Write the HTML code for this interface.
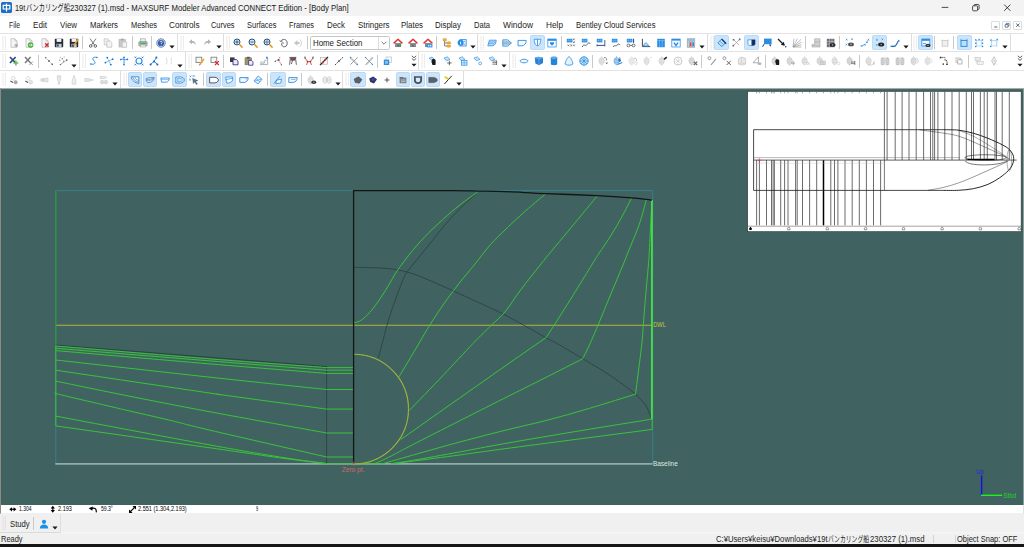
<!DOCTYPE html><html><head><meta charset="utf-8"><title>MAXSURF Modeler</title><style>
*{box-sizing:border-box}
html,body{margin:0;padding:0}
body{width:1024px;height:547px;position:relative;overflow:hidden;background:#fff;font-family:"Liberation Sans","Noto Sans CJK JP",sans-serif;color:#1a1a1a}
.abs{position:absolute}
#title{left:0;top:0;width:1024px;height:16px;background:#f3f3f3}
#title .t{left:15px;top:2.2px;font-size:8.6px;line-height:11px;white-space:nowrap;color:#111;letter-spacing:-0.12px}
#menu{left:0;top:16px;width:1024px;height:17px;background:#fff}
.mi{position:absolute;top:20px;font-size:8.3px;line-height:10px;white-space:nowrap;color:#1c1c1c}
#tb{left:0;top:33px;width:1024px;height:56px;background:#fff}
#canvas{left:0;top:88.5px;width:1024px;height:416.3px;background:#406361}
#info{left:0;top:505px;width:1024px;height:8.5px;background:#fff}
#study{left:0;top:513.3px;width:1024px;height:20px;background:#f0f0f0}
#status{left:0;top:533px;width:1024px;height:11px;background:#f0f0f0}
#black{left:0;top:543.8px;width:1024px;height:4px;background:#161616}
svg{position:absolute;overflow:visible}
svg text{font-family:"Liberation Sans","Noto Sans CJK JP",sans-serif}
</style></head><body>
<div id="title" class="abs"></div>
<div class="abs fit" style="left:15.30px;top:2.90px;font-size:9px;line-height:10.8px;color:#181818;white-space:nowrap;transform-origin:0 50%;transform:scaleX(0.8230);">19t</div>
<div class="abs fit" style="left:25.90px;top:2.70px;font-size:8.7px;line-height:10.4px;color:#181818;white-space:nowrap;transform-origin:0 50%;transform:scaleX(0.7184);">バンカリング船</div>
<div class="abs fit" style="left:69.75px;top:2.90px;font-size:9px;line-height:10.8px;color:#181818;white-space:nowrap;transform-origin:0 50%;transform:scaleX(0.8631);">230327 (1).msd - MAXSURF Modeler Advanced CONNECT Edition - [Body Plan]</div>
<div id="menu" class="abs"></div>
<div class="abs fit" style="left:8.50px;top:19.60px;font-size:8.4px;line-height:10.1px;color:#1c1c1c;white-space:nowrap;transform-origin:0 50%;transform:scaleX(0.8148);">File</div>
<div class="abs fit" style="left:33.00px;top:19.60px;font-size:8.4px;line-height:10.1px;color:#1c1c1c;white-space:nowrap;transform-origin:0 50%;transform:scaleX(0.9697);">Edit</div>
<div class="abs fit" style="left:60.00px;top:19.60px;font-size:8.4px;line-height:10.1px;color:#1c1c1c;white-space:nowrap;transform-origin:0 50%;transform:scaleX(0.9436);">View</div>
<div class="abs fit" style="left:89.50px;top:19.60px;font-size:8.4px;line-height:10.1px;color:#1c1c1c;white-space:nowrap;transform-origin:0 50%;transform:scaleX(0.9256);">Markers</div>
<div class="abs fit" style="left:130.50px;top:19.60px;font-size:8.4px;line-height:10.1px;color:#1c1c1c;white-space:nowrap;transform-origin:0 50%;transform:scaleX(0.8865);">Meshes</div>
<div class="abs fit" style="left:169.00px;top:19.60px;font-size:8.4px;line-height:10.1px;color:#1c1c1c;white-space:nowrap;transform-origin:0 50%;transform:scaleX(0.9780);">Controls</div>
<div class="abs fit" style="left:211.00px;top:19.60px;font-size:8.4px;line-height:10.1px;color:#1c1c1c;white-space:nowrap;transform-origin:0 50%;transform:scaleX(0.8857);">Curves</div>
<div class="abs fit" style="left:247.00px;top:19.60px;font-size:8.4px;line-height:10.1px;color:#1c1c1c;white-space:nowrap;transform-origin:0 50%;transform:scaleX(0.8922);">Surfaces</div>
<div class="abs fit" style="left:289.00px;top:19.60px;font-size:8.4px;line-height:10.1px;color:#1c1c1c;white-space:nowrap;transform-origin:0 50%;transform:scaleX(0.8806);">Frames</div>
<div class="abs fit" style="left:327.00px;top:19.60px;font-size:8.4px;line-height:10.1px;color:#1c1c1c;white-space:nowrap;transform-origin:0 50%;transform:scaleX(0.9427);">Deck</div>
<div class="abs fit" style="left:357.50px;top:19.60px;font-size:8.4px;line-height:10.1px;color:#1c1c1c;white-space:nowrap;transform-origin:0 50%;transform:scaleX(0.9399);">Stringers</div>
<div class="abs fit" style="left:401.00px;top:19.60px;font-size:8.4px;line-height:10.1px;color:#1c1c1c;white-space:nowrap;transform-origin:0 50%;transform:scaleX(0.9450);">Plates</div>
<div class="abs fit" style="left:435.00px;top:19.60px;font-size:8.4px;line-height:10.1px;color:#1c1c1c;white-space:nowrap;transform-origin:0 50%;transform:scaleX(0.9465);">Display</div>
<div class="abs fit" style="left:474.00px;top:19.60px;font-size:8.4px;line-height:10.1px;color:#1c1c1c;white-space:nowrap;transform-origin:0 50%;transform:scaleX(0.9038);">Data</div>
<div class="abs fit" style="left:503.00px;top:19.60px;font-size:8.4px;line-height:10.1px;color:#1c1c1c;white-space:nowrap;transform-origin:0 50%;transform:scaleX(1.0068);">Window</div>
<div class="abs fit" style="left:546.00px;top:19.60px;font-size:8.4px;line-height:10.1px;color:#1c1c1c;white-space:nowrap;transform-origin:0 50%;transform:scaleX(0.9864);">Help</div>
<div class="abs fit" style="left:575.75px;top:19.60px;font-size:8.4px;line-height:10.1px;color:#1c1c1c;white-space:nowrap;transform-origin:0 50%;transform:scaleX(0.9181);">Bentley Cloud Services</div>
<div id="tb" class="abs"></div>
<div id="canvas" class="abs"></div>
<div id="info" class="abs"></div>
<div id="study" class="abs"></div>
<div id="status" class="abs"></div>
<div id="black" class="abs"></div>
<svg class="abs" style="left:0;top:0" width="1024" height="547" viewBox="0 0 1024 547">
<rect x="0" y="88.5" width="1" height="425" fill="#8a8a86"/>
<rect x="0" y="88.3" width="1024" height="0.9" fill="#7e8886"/>
<rect x="1023" y="89" width="1" height="416" fill="#8e9c9a"/>
<rect x="1023" y="505" width="1" height="8.4" fill="#e2e2e2"/>
<rect x="0" y="532.4" width="1024" height="0.8" fill="#f9f9f9"/>
<rect x="55.8" y="190.6" width="596.9" height="273.1" fill="none" stroke="#3b7f8e" stroke-width="0.9"/>
<line x1="55.3" y1="463.9" x2="652.5" y2="463.9" stroke="#93aaa8" stroke-width="1.7"/>
<line x1="55.8" y1="325.2" x2="652" y2="325.2" stroke="#b4b43a" stroke-width="1.1"/>
<line x1="55.8" y1="190.6" x2="55.8" y2="345.6" stroke="#2f9a33" stroke-width="1.1"/>
<line x1="55.8" y1="345.6" x2="55.8" y2="425.9" stroke="#38c43a" stroke-width="1"/>
<polyline points="55.8,345.1 326.6,366.6" fill="none" stroke="#2a3e3f" stroke-width="0.9" />
<polyline points="326.6,366.6 326.6,463.7" fill="none" stroke="#2a3e3f" stroke-width="0.8" />
<path d="M55.80,346.00 C81.50,348.15 164.87,355.30 210.00,358.90 C255.13,362.50 307.17,366.15 326.60,367.60" fill="none" stroke="#38c43a" stroke-width="1" />
<path d="M55.80,348.30 C81.50,350.40 164.87,357.25 210.00,360.90 C255.13,364.55 307.17,368.65 326.60,370.20" fill="none" stroke="#38c43a" stroke-width="1" />
<path d="M55.80,350.60 C81.50,352.82 164.87,360.10 210.00,363.90 C255.13,367.70 307.17,371.82 326.60,373.40" fill="none" stroke="#38c43a" stroke-width="1" />
<path d="M55.80,360.00 C81.50,362.87 164.87,372.28 210.00,377.20 C255.13,382.12 307.17,387.45 326.60,389.50" fill="none" stroke="#38c43a" stroke-width="1" />
<path d="M55.80,370.20 C81.50,374.02 182.13,388.97 210.00,393.10 C237.87,397.23 203.57,392.33 223.00,395.00 C242.43,397.67 309.33,406.75 326.60,409.10" fill="none" stroke="#38c43a" stroke-width="1" />
<path d="M55.80,381.10 C67.07,383.42 97.70,389.88 123.40,395.00 C149.10,400.12 176.13,405.47 210.00,411.80 C243.87,418.13 307.17,429.47 326.60,433.00" fill="none" stroke="#38c43a" stroke-width="1" />
<path d="M55.80,393.10 C56.78,393.42 49.65,392.08 61.70,395.00 C73.75,397.92 110.26,406.43 128.10,410.60 C145.94,414.77 155.10,416.73 168.75,420.00 C182.40,423.27 183.69,424.03 210.00,430.20 C236.31,436.37 307.17,452.53 326.60,457.00" fill="none" stroke="#38c43a" stroke-width="1" />
<path d="M55.80,416.10 C81.50,420.92 172.12,438.10 210.00,445.00 C247.88,451.90 263.88,454.43 283.10,457.50 C302.32,460.57 318.27,462.42 325.30,463.40" fill="none" stroke="#38c43a" stroke-width="1" />
<path d="M55.80,425.90 C81.50,429.55 172.12,442.40 210.00,447.80 C247.88,453.20 263.88,455.70 283.10,458.30 C302.32,460.90 318.27,462.55 325.30,463.40" fill="none" stroke="#38c43a" stroke-width="1" />
<line x1="326.6" y1="367.6" x2="353.4" y2="367.6" stroke="#38c43a" stroke-width="1"/>
<line x1="326.6" y1="370.2" x2="353.4" y2="370.2" stroke="#38c43a" stroke-width="1"/>
<line x1="326.6" y1="373.4" x2="353.4" y2="373.4" stroke="#38c43a" stroke-width="1"/>
<line x1="326.6" y1="389.5" x2="353.4" y2="389.5" stroke="#38c43a" stroke-width="1"/>
<line x1="326.6" y1="409.1" x2="353.4" y2="409.1" stroke="#38c43a" stroke-width="1"/>
<line x1="326.6" y1="433.0" x2="353.4" y2="433.0" stroke="#38c43a" stroke-width="1"/>
<line x1="326.6" y1="457.0" x2="353.4" y2="457.0" stroke="#38c43a" stroke-width="1"/>
<line x1="325" y1="463.75" x2="384" y2="463.75" stroke="#38c43a" stroke-width="1.2"/>
<path d="M378.10,358.30 C378.50,356.92 379.02,355.52 380.50,350.00 C381.98,344.48 385.05,332.07 387.00,325.20 C388.95,318.32 390.30,314.35 392.20,308.75 C394.10,303.15 396.32,297.08 398.40,291.60 C400.48,286.12 403.00,279.50 404.70,275.90 C406.40,272.30 404.70,275.00 408.60,270.00 C412.50,265.00 422.24,253.17 428.10,245.90 C433.96,238.63 438.53,232.52 443.75,226.40 C448.97,220.28 453.59,215.06 459.40,209.20 C465.21,203.34 475.40,194.24 478.60,191.25" fill="none" stroke="#2a3e3f" stroke-width="0.8" />
<path d="M353.90,267.30 C358.46,267.43 374.08,267.70 381.25,268.10 C388.42,268.50 391.69,268.78 396.90,269.70 C402.11,270.62 407.30,271.92 412.50,273.60 C417.70,275.28 421.33,276.93 428.10,279.80 C434.87,282.67 445.28,287.28 453.10,290.80 C460.92,294.32 468.75,298.03 475.00,300.90 C481.25,303.77 485.60,305.65 490.60,308.00 C495.60,310.35 499.48,312.13 505.00,315.00 C510.52,317.87 516.93,321.42 523.75,325.20 C530.57,328.98 539.91,334.40 545.90,337.70 C551.89,341.00 553.57,341.49 559.70,345.00 C565.83,348.51 574.88,354.07 582.70,358.75 C590.52,363.43 600.02,368.89 606.60,373.10 C613.18,377.31 617.38,380.48 622.20,384.00 C627.02,387.52 631.60,390.67 635.50,394.20 C639.40,397.73 643.13,401.68 645.60,405.20 C648.07,408.72 649.30,412.97 650.30,415.30 C651.30,417.63 651.38,418.55 651.60,419.20" fill="none" stroke="#2a3e3f" stroke-width="0.8" />
<path d="M353.90,322.80 C354.82,322.54 357.45,322.28 359.40,321.25 C361.35,320.22 363.27,318.81 365.60,316.60 C367.93,314.39 370.79,311.27 373.40,308.00 C376.01,304.73 378.63,300.92 381.25,297.00 C383.87,293.08 386.49,288.79 389.10,284.50 C391.71,280.21 393.00,276.90 396.90,271.25 C400.80,265.60 407.30,256.91 412.50,250.60 C417.70,244.29 422.89,238.73 428.10,233.40 C433.31,228.07 438.53,223.28 443.75,218.60 C448.97,213.92 453.59,209.86 459.40,205.30 C465.21,200.74 475.40,193.59 478.60,191.25" fill="none" stroke="#38c43a" stroke-width="1" />
<path d="M545.90,193.60 C542.98,196.07 533.92,203.58 528.40,208.40 C522.88,213.22 516.70,218.90 512.80,222.50 C508.90,226.10 508.70,226.35 505.00,230.00 C501.30,233.65 495.73,238.57 490.60,244.40 C485.47,250.23 479.40,258.57 474.20,265.00 C469.00,271.43 464.47,276.50 459.40,283.00 C454.32,289.50 448.70,296.97 443.75,304.00 C438.80,311.03 433.99,318.37 429.70,325.20 C425.41,332.03 423.13,336.37 418.00,345.00 C412.87,353.63 402.08,371.67 398.90,377.00" fill="none" stroke="#38c43a" stroke-width="1" />
<path d="M597.50,195.60 C595.10,198.52 588.10,207.05 583.10,213.10 C578.10,219.15 572.70,225.65 567.50,231.90 C562.30,238.15 556.45,245.08 551.90,250.60 C547.35,256.12 545.42,258.43 540.20,265.00 C534.98,271.57 526.47,282.18 520.60,290.00 C514.73,297.82 509.87,306.03 505.00,311.90 C500.13,317.77 496.73,319.93 491.40,325.20 C486.07,330.47 480.94,335.25 473.00,343.50 C465.06,351.75 454.35,363.55 443.75,374.70 C433.15,385.85 415.12,404.45 409.40,410.40" fill="none" stroke="#38c43a" stroke-width="1" />
<path d="M631.60,197.80 C630.03,200.88 625.59,210.05 622.20,216.25 C618.81,222.45 615.16,228.75 611.25,235.00 C607.34,241.25 602.01,248.75 598.75,253.75 C595.49,258.75 595.61,258.69 591.70,265.00 C587.79,271.31 581.55,281.57 575.30,291.60 C569.05,301.63 559.10,317.52 554.20,325.20 C549.30,332.88 547.28,335.62 545.90,337.70" fill="none" stroke="#38c43a" stroke-width="1" />
<path d="M545.90,337.70 C539.92,341.85 521.82,354.35 510.00,362.60 C498.18,370.85 486.04,379.43 475.00,387.20 C463.96,394.97 456.12,400.48 443.75,409.20 C431.38,417.92 407.96,434.45 400.80,439.50" fill="none" stroke="#38c43a" stroke-width="1" />
<path d="M646.40,199.40 C645.23,203.50 642.13,215.98 639.40,224.00 C636.67,232.02 632.73,240.67 630.00,247.50 C627.27,254.33 626.12,257.40 623.00,265.00 C619.88,272.60 615.42,283.07 611.25,293.10 C607.08,303.13 601.64,316.55 598.00,325.20 C594.36,333.85 591.95,339.41 589.40,345.00 C586.85,350.59 583.82,356.46 582.70,358.75" fill="none" stroke="#38c43a" stroke-width="1" />
<path d="M582.70,358.75 C576.25,362.02 556.12,372.29 544.00,378.40 C531.88,384.51 524.10,388.32 510.00,395.40 C495.90,402.48 475.65,412.67 459.40,420.90 C443.15,429.13 423.23,439.28 412.50,444.80 C401.77,450.32 399.92,451.47 395.00,454.00 C390.08,456.53 386.33,458.45 383.00,460.00 C379.67,461.55 376.33,462.75 375.00,463.30" fill="none" stroke="#38c43a" stroke-width="1" />
<path d="M651.90,200.20 C651.50,208.08 650.08,236.70 649.50,247.50 C648.92,258.30 649.05,256.88 648.40,265.00 C647.75,273.12 646.45,286.22 645.60,296.25 C644.75,306.28 643.95,317.07 643.30,325.20 C642.65,333.32 643.00,333.50 641.70,345.00 C640.40,356.50 636.53,386.00 635.50,394.20" fill="none" stroke="#38c43a" stroke-width="1" />
<path d="M635.50,394.20 C626.77,396.87 598.35,405.73 583.10,410.20 C567.85,414.67 557.02,417.65 544.00,421.00 C530.98,424.35 519.10,426.78 505.00,430.30 C490.90,433.82 474.82,437.95 459.40,442.10 C443.98,446.25 425.13,451.65 412.50,455.20 C399.87,458.75 388.42,462.03 383.60,463.40" fill="none" stroke="#38c43a" stroke-width="1" />
<path d="M651.60,419.20 C640.45,421.00 609.13,425.95 584.70,430.00 C560.27,434.05 525.88,439.83 505.00,443.50 C484.12,447.17 474.82,449.18 459.40,452.00 C443.98,454.82 423.97,458.44 412.50,460.40 C401.03,462.36 394.25,463.19 390.60,463.75" fill="none" stroke="#38c43a" stroke-width="1" />
<path d="M652.30,429.40 C627.75,432.62 537.15,444.43 505.00,448.70 C472.85,452.97 474.82,452.92 459.40,455.00 C443.98,457.08 423.18,459.80 412.50,461.20 C401.82,462.60 398.17,463.03 395.30,463.40" fill="none" stroke="#38c43a" stroke-width="1" />
<line x1="651.9" y1="200" x2="651.9" y2="419.2" stroke="#45dc48" stroke-width="1.9"/>
<line x1="652.2" y1="419" x2="652.2" y2="429.4" stroke="#38c43a" stroke-width="1"/>
<path d="M353.7,354.3 A54.8,54.8 0 0 1 353.7,463.9" fill="none" stroke="#b6aa3c" stroke-width="1.1"/>
<path d="M353.7,354.3 A54.8,54.8 0 0 1 353.7,463.9" fill="none" stroke="#58c43c" stroke-width="0.7" stroke-dasharray="2 2"/>
<line x1="353.6" y1="190" x2="353.6" y2="464" stroke="#111614" stroke-width="1.3"/>
<path d="M353.00,190.60 C369.67,190.62 432.07,190.62 453.00,190.70 C473.93,190.78 469.93,190.95 478.60,191.10 C487.27,191.25 493.83,191.18 505.00,191.60 C516.17,192.02 530.23,192.93 545.60,193.60 C560.97,194.27 582.87,194.90 597.20,195.60 C611.53,196.30 623.40,197.17 631.60,197.80 C639.80,198.43 643.02,199.00 646.40,199.40 C649.78,199.80 650.98,200.07 651.90,200.20" fill="none" stroke="#111614" stroke-width="1.3" />
<path d="M351.6,463.8h4M353.6,461.8v4" stroke="#d06a68" stroke-width="0.7" fill="none"/>
<text x="341.7" y="472.4" font-size="7.2" fill="#cf6664" textLength="22.8" lengthAdjust="spacingAndGlyphs">Zero pt.</text>
<text x="653.2" y="327.1" font-size="6.9" fill="#c4ca3e" textLength="12.6" lengthAdjust="spacingAndGlyphs">DWL</text>
<text x="652.9" y="465.9" font-size="6.9" fill="#dfe6e5" textLength="24.9" lengthAdjust="spacingAndGlyphs">Baseline</text>
<line x1="981.6" y1="475.3" x2="981.6" y2="495.8" stroke="#1010e8" stroke-width="1.4"/>
<line x1="981" y1="495.3" x2="1002.2" y2="495.3" stroke="#1ef01e" stroke-width="1.4"/>
<text x="976.2" y="474" font-size="6.6" fill="#2424d8" textLength="7.6" lengthAdjust="spacingAndGlyphs">Up</text>
<text x="1003.2" y="497.8" font-size="6.6" fill="#22d022" textLength="13" lengthAdjust="spacingAndGlyphs">Stbd</text>
</svg>
<svg class="abs" style="left:0;top:0" width="1024" height="547" viewBox="0 0 1024 547">
<rect x="747.6" y="91.3" width="273.6" height="140.4" fill="#fff" stroke="#2e3c3c" stroke-width="0.7"/>
<path d="M756.6,160.2V225.3M759.4,160.2V225.3M766.5,160.2V225.3M771.5,160.2V225.3M773.1,160.2V225.3M774.4,160.2V225.3M780.7,160.2V225.3M784.6,160.2V225.3M788.0,160.2V225.3M795.6,160.2V225.3M797.2,160.2V225.3M802.5,160.2V225.3M809.6,160.2V225.3M816.7,160.2V225.3M830.8,160.2V225.3M834.5,160.2V225.3M837.9,160.2V225.3M845.0,160.2V225.3M852.2,160.2V225.3M859.3,160.2V225.3M866.4,160.2V225.3M873.5,160.2V225.3M880.6,160.2V225.3" stroke="#1c1c1c" stroke-width="0.65" fill="none"/>
<line x1="823.5" y1="160.2" x2="823.5" y2="225.3" stroke="#000" stroke-width="1.5"/>
<path d="M884.4,91.8V160M887.1,91.8V160M895.2,91.8V160M902.1,91.8V160M909.0,91.8V160M916.2,91.8V160M923.6,91.8V160M930.5,91.8V160M932.8,91.8V160M934.6,91.8V160M937.9,91.8V160M944.8,91.8V160M952.0,91.8V160M959.2,91.8V160M966.3,91.8V160M971.5,91.8V160M973.5,91.8V160M980.4,91.8V160M984.2,91.8V160M987.3,91.8V160M995.0,91.8V160M996.5,91.8V160M1002.2,91.8V160M1009.3,91.8V160" stroke="#1c1c1c" stroke-width="0.65" fill="none"/>
<line x1="884.4" y1="160.0" x2="884.4" y2="190.4" stroke="#1c1c1c" stroke-width="0.6"/>
<path d="M756.6,91.8V93.3M759.4,91.8V93.3M766.5,91.8V93.3M771.5,91.8V93.3M773.1,91.8V93.3M774.4,91.8V93.3M780.7,91.8V93.3M784.6,91.8V93.3M788.0,91.8V93.3M795.6,91.8V93.3M797.2,91.8V93.3M802.5,91.8V93.3M809.6,91.8V93.3M816.7,91.8V93.3M830.8,91.8V93.3M834.5,91.8V93.3M837.9,91.8V93.3M845.0,91.8V93.3M852.2,91.8V93.3M859.3,91.8V93.3M866.4,91.8V93.3M873.5,91.8V93.3M880.6,91.8V93.3M823.5,91.8V93.3" stroke="#555" stroke-width="0.5" fill="none"/>
<path d="M944,129.7H753.6V190.4H944" fill="none" stroke="#1c1c1c" stroke-width="0.8"/>
<path d="M944.00,129.70 C946.43,129.78 953.72,129.62 958.60,130.20 C963.48,130.78 968.42,131.85 973.30,133.20 C978.18,134.55 983.03,136.35 987.90,138.30 C992.77,140.25 998.85,142.95 1002.50,144.90 C1006.15,146.85 1007.97,148.05 1009.80,150.00 C1011.63,151.95 1013.02,154.28 1013.50,156.60 C1013.98,158.92 1013.55,161.58 1012.70,163.90 C1011.85,166.22 1010.58,168.18 1008.40,170.50 C1006.22,172.82 1003.02,175.48 999.60,177.80 C996.18,180.12 992.28,182.58 987.90,184.40 C983.52,186.22 978.18,187.72 973.30,188.70 C968.42,189.68 963.48,190.02 958.60,190.30 C953.72,190.58 946.43,190.38 944.00,190.40" fill="none" stroke="#1c1c1c" stroke-width="0.95" />
<path d="M919.40,129.80 C923.50,130.37 937.47,132.15 944.00,133.20 C950.53,134.25 953.72,134.65 958.60,136.10 C963.48,137.55 968.42,139.83 973.30,141.90 C978.18,143.97 983.03,146.30 987.90,148.50 C992.77,150.70 999.08,153.38 1002.50,155.10 C1005.92,156.82 1007.42,158.18 1008.40,158.80" fill="none" stroke="#1c1c1c" stroke-width="0.45" />
<path d="M927.90,190.30 C930.58,189.80 938.88,188.53 944.00,187.30 C949.12,186.07 953.72,184.62 958.60,182.90 C963.48,181.18 968.42,179.07 973.30,177.00 C978.18,174.93 983.03,172.68 987.90,170.50 C992.77,168.32 999.08,165.48 1002.50,163.90 C1005.92,162.32 1007.42,161.48 1008.40,161.00" fill="none" stroke="#1c1c1c" stroke-width="0.45" />
<path d="M958.00,130.00 C960.83,131.17 969.67,134.33 975.00,137.00 C980.33,139.67 985.17,143.00 990.00,146.00 C994.83,149.00 1000.83,152.83 1004.00,155.00 C1007.17,157.17 1008.17,158.33 1009.00,159.00" fill="none" stroke="#1c1c1c" stroke-width="0.35" />
<line x1="753.6" y1="160.1" x2="1016.7" y2="160.1" stroke="#1c1c1c" stroke-width="0.7"/>
<line x1="753.6" y1="157.6" x2="960.0" y2="157.6" stroke="#777" stroke-width="0.5"/>
<line x1="753.6" y1="163.2" x2="884.0" y2="163.2" stroke="#aaa" stroke-width="0.3"/>
<ellipse cx="985.5" cy="157.6" rx="20.5" ry="2.9" fill="none" stroke="#1c1c1c" stroke-width="0.6"/>
<path d="M965.3,161 C968,166.5 1000,166 1007,160.8" fill="none" stroke="#1c1c1c" stroke-width="0.6"/>
<line x1="967.4" y1="159.4" x2="994.5" y2="159.4" stroke="#000" stroke-width="1.3"/>
<ellipse cx="1009.3" cy="160.2" rx="2.3" ry="10.8" fill="none" stroke="#1c1c1c" stroke-width="0.35"/>
<path d="M757.2,160.2h4.4M759.4,158v4.4" stroke="#e03030" stroke-width="0.5" fill="none"/>
<line x1="748.0" y1="226.2" x2="1021.0" y2="226.2" stroke="#444" stroke-width="0.5"/>
<path d="M749.3,230v-1.8l1.2,-1.4l1.2,1.4v1.8z" fill="#000"/>
<path d="M787.6,229.8v-1.6l1.2,-1.3l1.2,1.3v1.6z" fill="none" stroke="#333" stroke-width="0.5"/>
<path d="M826.1,229.8v-1.6l1.2,-1.3l1.2,1.3v1.6z" fill="none" stroke="#333" stroke-width="0.5"/>
<path d="M864.4,229.8v-1.6l1.2,-1.3l1.2,1.3v1.6z" fill="none" stroke="#333" stroke-width="0.5"/>
<path d="M902.3,229.8v-1.6l1.2,-1.3l1.2,1.3v1.6z" fill="none" stroke="#333" stroke-width="0.5"/>
<path d="M940.9,229.8v-1.6l1.2,-1.3l1.2,1.3v1.6z" fill="none" stroke="#333" stroke-width="0.5"/>
<path d="M979.2,229.8v-1.6l1.2,-1.3l1.2,1.3v1.6z" fill="none" stroke="#333" stroke-width="0.5"/>
<path d="M1018.0,229.8v-1.6l1.2,-1.3l1.2,1.3v1.6z" fill="none" stroke="#333" stroke-width="0.5"/>
</svg>
<div class="abs" style="left:0;top:33.2px;width:1024px;height:1px;background:#e2e2e2"></div>
<div class="abs" style="left:0;top:51.2px;width:1024px;height:1px;background:#e2e2e2"></div>
<div class="abs" style="left:0;top:70.0px;width:1024px;height:1px;background:#e2e2e2"></div>
<svg class="abs" style="left:1.80px;top:34.50px" width="5" height="16.0" viewBox="0 0 5 16.0"><path d="M1,1.5V14.5M3.4,1.5V14.5" stroke="#c4c4c4" stroke-width="0.9" stroke-dasharray="0.8 1.25" fill="none"/></svg>
<svg class="abs" style="left:9.40px;top:37.60px" width="10" height="10" viewBox="0 0 10 10"><path d="M2,0.7h3.8l2.3,2.3v6.3h-6.1z" fill="#f6f6f6" stroke="#b4b4b4" stroke-width="0.7"/><path d="M5.8,0.7v2.3h2.3" fill="none" stroke="#b4b4b4" stroke-width="0.6"/><path d="M7.2,5.6v3.6M5.4,7.4h3.6M6,6.2l2.4,2.4M8.4,6.2L6,8.6" stroke="#9c9c9c" stroke-width="0.7"/></svg>
<svg class="abs" style="left:24.40px;top:37.60px" width="10" height="10" viewBox="0 0 10 10"><path d="M2,0.7h3.8l2.3,2.3v6.3h-6.1z" fill="#f6f6f6" stroke="#b4b4b4" stroke-width="0.7"/><path d="M5.8,0.7v2.3h2.3" fill="none" stroke="#b4b4b4" stroke-width="0.6"/><circle cx="6.6" cy="7" r="2.8" fill="#4cae3c"/><path d="M5,7h3M7,5.7l1.3,1.3l-1.3,1.3" stroke="#fff" stroke-width="0.8" fill="none"/></svg>
<svg class="abs" style="left:40.00px;top:37.60px" width="10" height="10" viewBox="0 0 10 10"><path d="M2,0.7h3.8l2.3,2.3v6.3h-6.1z" fill="#f6f6f6" stroke="#b4b4b4" stroke-width="0.7"/><path d="M5.8,0.7v2.3h2.3" fill="none" stroke="#b4b4b4" stroke-width="0.6"/><path d="M5.2,5.3l3.4,3.4M8.6,5.3L5.2,8.7" stroke="#e0262c" stroke-width="1.4"/></svg>
<svg class="abs" style="left:54.40px;top:37.60px" width="10" height="10" viewBox="0 0 10 10"><rect x="0.8" y="0.8" width="8.4" height="8.4" rx="0.6" fill="#262b38"/><rect x="2.6" y="0.8" width="4.8" height="3.1" fill="#f2f2f2"/><rect x="2.4" y="5.8" width="5.2" height="3.4" fill="#c9ccd2"/><rect x="3.2" y="6.4" width="1.4" height="2.2" fill="#262b38"/></svg>
<svg class="abs" style="left:69.40px;top:37.60px" width="10" height="10" viewBox="0 0 10 10"><rect x="0.8" y="0.8" width="8.4" height="8.4" rx="0.6" fill="#262b38"/><rect x="2.6" y="0.8" width="4.8" height="3.1" fill="#f2f2f2"/><rect x="2.4" y="5.8" width="5.2" height="3.4" fill="#c9ccd2"/><rect x="3.2" y="6.4" width="1.4" height="2.2" fill="#262b38"/><path d="M9.3,1.2L4.6,7.6" stroke="#eba12e" stroke-width="1.6"/><path d="M4.6,7.6l-0.7,1.5" stroke="#333" stroke-width="0.9"/></svg>
<div class="abs" style="left:82.25px;top:36.10px;width:1px;height:13px;background:#c9c9c9"></div>
<svg class="abs" style="left:88.00px;top:37.60px" width="10" height="10" viewBox="0 0 10 10"><path d="M2,0.6L6.6,7M8,0.6L3.4,7" stroke="#555" stroke-width="0.8" fill="none"/><circle cx="2.7" cy="8" r="1.3" fill="none" stroke="#444" stroke-width="0.8"/><circle cx="7.3" cy="8" r="1.3" fill="none" stroke="#444" stroke-width="0.8"/></svg>
<svg class="abs" style="left:103.00px;top:37.60px" width="10" height="10" viewBox="0 0 10 10"><path d="M1.2,0.8h3.4l1.6,1.6v4.4h-5z" fill="#f4f4f4" stroke="#bcbcbc" stroke-width="0.7"/><path d="M3.8,3h3.4l1.6,1.6v4.6h-5z" fill="#f4f4f4" stroke="#bcbcbc" stroke-width="0.7"/></svg>
<svg class="abs" style="left:118.00px;top:37.60px" width="10" height="10" viewBox="0 0 10 10"><rect x="1" y="1.6" width="6.4" height="7.4" fill="#c9c9c9" stroke="#b0b0b0" stroke-width="0.6"/><rect x="2.8" y="0.6" width="2.8" height="1.8" fill="#a8a8a8"/><rect x="4.2" y="4" width="4.6" height="5.2" fill="#f2f2f2" stroke="#b8b8b8" stroke-width="0.6"/></svg>
<div class="abs" style="left:131.90px;top:36.10px;width:1px;height:13px;background:#c9c9c9"></div>
<svg class="abs" style="left:137.70px;top:37.60px" width="10" height="10" viewBox="0 0 10 10"><rect x="2.4" y="0.8" width="5.2" height="3.2" fill="#eee" stroke="#999" stroke-width="0.6"/><rect x="0.8" y="3.6" width="8.4" height="4.4" rx="0.6" fill="#b9bcc0" stroke="#8e9196" stroke-width="0.6"/><rect x="1.6" y="4.6" width="6.8" height="1.3" fill="#3fb34a"/><rect x="2.4" y="7" width="5.2" height="2" fill="#f3f3f3" stroke="#999" stroke-width="0.5"/></svg>
<div class="abs" style="left:150.60px;top:36.10px;width:1px;height:13px;background:#c9c9c9"></div>
<svg class="abs" style="left:156.40px;top:37.60px" width="10" height="10" viewBox="0 0 10 10"><circle cx="5" cy="5" r="4.2" fill="#dfe8f6" stroke="#3a5ea8" stroke-width="0.8"/><circle cx="5" cy="5" r="3.1" fill="#2f57a8"/><path d="M4,4.2c0,-1.4 2.2,-1.4 2.2,0c0,0.9 -1.1,0.8 -1.1,1.8" stroke="#fff" stroke-width="0.8" fill="none"/><circle cx="5.1" cy="7" r="0.45" fill="#fff"/></svg>
<svg class="abs" style="left:169.40px;top:44.90px" width="6" height="4" viewBox="0 0 6 4"><path d="M0.4,0.5H5.6L3,3.4z" fill="#1a1a1a"/></svg>
<div class="abs" style="left:177.10px;top:34.00px;width:1px;height:17.00px;background:#dedede"></div>
<svg class="abs" style="left:180.40px;top:34.50px" width="5" height="16.0" viewBox="0 0 5 16.0"><path d="M1,1.5V14.5M3.4,1.5V14.5" stroke="#c4c4c4" stroke-width="0.9" stroke-dasharray="0.8 1.25" fill="none"/></svg>
<svg class="abs" style="left:188.10px;top:38.10px" width="9" height="9" viewBox="0 0 10 10"><path d="M1,4.2L4.4,1.4V3.2C7.6,3.2 8.8,5.2 8.6,8.2C8,6.4 6.8,5.4 4.4,5.4V7z" fill="#b2b2b2"/></svg>
<svg class="abs" style="left:203.10px;top:38.10px" width="9" height="9" viewBox="0 0 10 10"><path d="M9,4.2L5.6,1.4V3.2C2.4,3.2 1.2,5.2 1.4,8.2C2,6.4 3.2,5.4 5.6,5.4V7z" fill="#b2b2b2"/></svg>
<svg class="abs" style="left:215.50px;top:44.90px" width="6" height="4" viewBox="0 0 6 4"><path d="M0.4,0.5H5.6L3,3.4z" fill="#1a1a1a"/></svg>
<div class="abs" style="left:223.10px;top:34.00px;width:1px;height:17.00px;background:#dedede"></div>
<svg class="abs" style="left:226.20px;top:34.50px" width="5" height="16.0" viewBox="0 0 5 16.0"><path d="M1,1.5V14.5M3.4,1.5V14.5" stroke="#c4c4c4" stroke-width="0.9" stroke-dasharray="0.8 1.25" fill="none"/></svg>
<svg class="abs" style="left:233.30px;top:37.60px" width="10" height="10" viewBox="0 0 10 10"><circle cx="4" cy="4" r="3" fill="#d4e8f8" stroke="#24507c" stroke-width="1"/><path d="M6.3,6.3l2.8,2.8" stroke="#e8962a" stroke-width="1.5" stroke-linecap="round"/><path d="M2.4,4h3.2M4,2.4v3.2" stroke="#24507c" stroke-width="0.9"/></svg>
<svg class="abs" style="left:248.00px;top:37.60px" width="10" height="10" viewBox="0 0 10 10"><circle cx="4" cy="4" r="3" fill="#d4e8f8" stroke="#24507c" stroke-width="1"/><path d="M6.3,6.3l2.8,2.8" stroke="#e8962a" stroke-width="1.5" stroke-linecap="round"/><path d="M2.4,4h3.2" stroke="#24507c" stroke-width="0.9"/></svg>
<svg class="abs" style="left:263.10px;top:37.60px" width="10" height="10" viewBox="0 0 10 10"><circle cx="4" cy="4" r="3" fill="#d4e8f8" stroke="#24507c" stroke-width="1"/><path d="M6.3,6.3l2.8,2.8" stroke="#e8962a" stroke-width="1.5" stroke-linecap="round"/><path d="M1.4,4h5.2M4,1.4v5.2" stroke="#24507c" stroke-width="0.6"/></svg>
<svg class="abs" style="left:278.50px;top:37.60px" width="10" height="10" viewBox="0 0 10 10"><path d="M2,3.2C2.6,1 6.6,0.6 7.8,3.2C8.8,5.6 8,8.8 5.4,8.8C3.6,8.8 2.6,7.6 2.6,6.2C2.6,4.8 4,4.4 4.8,5.2" fill="none" stroke="#555" stroke-width="0.9"/><path d="M0.8,2.4l1.4,1.6l1.4,-1.2" fill="none" stroke="#555" stroke-width="0.8"/></svg>
<svg class="abs" style="left:293.10px;top:37.60px" width="10" height="10" viewBox="0 0 10 10"><path d="M1,5l3.4,-3v2h2.2v2H4.4v2z" fill="#c6c6c6"/><path d="M6.4,1.6C9,2 9,8 6.4,8.6" fill="none" stroke="#c6c6c6" stroke-width="0.8"/></svg>
<div class="abs" style="left:306.50px;top:36.10px;width:1px;height:13px;background:#c9c9c9"></div>
<div class="abs" style="left:310.4px;top:35.8px;width:79.2px;height:14.4px;border:1px solid #c6c6c6;border-radius:1.5px;background:#fff"></div>
<div class="abs fit" style="left:312.90px;top:37.90px;font-size:8.4px;line-height:10.1px;color:#202020;white-space:nowrap;transform-origin:0 50%;transform:scaleX(0.9390);">Home Section</div>
<div class="abs" style="left:377.6px;top:36.8px;width:1px;height:12.4px;background:#dcdcdc"></div>
<svg class="abs" style="left:380.6px;top:41px" width="6" height="4" viewBox="0 0 6 4"><path d="M0.6,0.8L3,3.2L5.4,0.8" fill="none" stroke="#555" stroke-width="0.8"/></svg>
<svg class="abs" style="left:392.70px;top:37.60px" width="10" height="10" viewBox="0 0 10 10"><path d="M2,9V5h6v4z" fill="#8a8f96"/><path d="M3.8,9V6.5h2.4V9z" fill="#6d7279"/><path d="M0.6,5.4L5,1.3L9.4,5.4" fill="none" stroke="#e3342f" stroke-width="1.5" stroke-linejoin="round"/><path d="M5.4,7.4h2.4M6.8,6.2l1.4,1.2l-1.4,1.2" stroke="#2ea043" stroke-width="0.9" fill="none"/></svg>
<svg class="abs" style="left:407.70px;top:37.60px" width="10" height="10" viewBox="0 0 10 10"><path d="M2,9V5h6v4z" fill="#8a8f96"/><path d="M3.8,9V6.5h2.4V9z" fill="#6d7279"/><path d="M0.6,5.4L5,1.3L9.4,5.4" fill="none" stroke="#e3342f" stroke-width="1.5" stroke-linejoin="round"/></svg>
<svg class="abs" style="left:422.70px;top:37.60px" width="10" height="10" viewBox="0 0 10 10"><path d="M2,9V5h6v4z" fill="#8a8f96"/><path d="M3.8,9V6.5h2.4V9z" fill="#6d7279"/><path d="M0.6,5.4L5,1.3L9.4,5.4" fill="none" stroke="#e3342f" stroke-width="1.5" stroke-linejoin="round"/><rect x="4" y="6" width="5.4" height="3.4" fill="#2a8de2"/><rect x="5" y="6.8" width="1.4" height="1.6" fill="#d6ecff"/><rect x="7" y="6.8" width="1.4" height="1.6" fill="#d6ecff"/></svg>
<div class="abs" style="left:436.00px;top:36.10px;width:1px;height:13px;background:#c9c9c9"></div>
<svg class="abs" style="left:441.75px;top:37.60px" width="10" height="10" viewBox="0 0 10 10"><path d="M2.6,2.6V8H5M2.6,5H5" stroke="#555" stroke-width="0.7" fill="none"/><rect x="1" y="0.6" width="3.4" height="2.4" rx="0.6" fill="#f0b040" stroke="#d08a1a" stroke-width="0.4"/><rect x="5" y="3.8" width="3.6" height="2.2" rx="0.6" fill="#f0b040" stroke="#d08a1a" stroke-width="0.4"/><rect x="5" y="7" width="3.6" height="2.2" rx="0.6" fill="#f0b040" stroke="#d08a1a" stroke-width="0.4"/></svg>
<svg class="abs" style="left:456.50px;top:37.60px" width="10" height="10" viewBox="0 0 10 10"><rect x="3" y="1.6" width="6.2" height="6.4" fill="#e4f1fd" stroke="#2a8de2" stroke-width="0.8"/><circle cx="3.6" cy="4.8" r="3" fill="#2a8de2"/><path d="M3.6,3.6v2.8" stroke="#fff" stroke-width="0.9"/><path d="M6.4,3.4h1.8M6.4,6.2h1.8" stroke="#2a8de2" stroke-width="0.6"/></svg>
<svg class="abs" style="left:469.50px;top:44.90px" width="6" height="4" viewBox="0 0 6 4"><path d="M0.4,0.5H5.6L3,3.4z" fill="#1a1a1a"/></svg>
<div class="abs" style="left:477.00px;top:34.00px;width:1px;height:17.00px;background:#dedede"></div>
<svg class="abs" style="left:480.20px;top:34.50px" width="5" height="16.0" viewBox="0 0 5 16.0"><path d="M1,1.5V14.5M3.4,1.5V14.5" stroke="#c4c4c4" stroke-width="0.9" stroke-dasharray="0.8 1.25" fill="none"/></svg>
<svg class="abs" style="left:487.40px;top:37.60px" width="10" height="10" viewBox="0 0 10 10"><path d="M2.4,2.2H9.2C9.2,5 7.6,7.8 5.6,7.8H0.8z" fill="#cfe7fb" stroke="#2a8de2" stroke-width="0.8" stroke-linejoin="round"/><path d="M2,4h6.6M1.4,5.8h6" stroke="#2a8de2" stroke-width="0.7"/></svg>
<svg class="abs" style="left:502.40px;top:37.60px" width="10" height="10" viewBox="0 0 10 10"><path d="M0.8,1.8H5.6L9.4,5L5.6,8.2H0.8z" fill="#cfe7fb" stroke="#2a8de2" stroke-width="0.8" stroke-linejoin="round"/><path d="M0.8,3.8H7.6L9.4,5L7.6,6.2H0.8z" fill="#b9bfc6" stroke="#2a8de2" stroke-width="0.4"/></svg>
<svg class="abs" style="left:517.30px;top:37.60px" width="10" height="10" viewBox="0 0 10 10"><path d="M1,2.4H9.2C9.2,5.4 7.4,7.8 4.8,7.8H1z" fill="#f4faff" stroke="#2a8de2" stroke-width="0.9" stroke-linejoin="round"/></svg>
<div class="abs" style="left:530.00px;top:35.10px;width:14.75px;height:14.8px;background:#cde5fa;border:0.6px solid #b9dbf8;border-radius:1.8px"></div>
<svg class="abs" style="left:533.10px;top:38.10px" width="9" height="9" viewBox="0 0 10 10"><path d="M1.4,1.4H8.6C8.6,5.4 7.4,8.6 5,8.6C2.6,8.6 1.4,5.4 1.4,1.4z" fill="#f4faff" stroke="#2a8de2" stroke-width="0.9"/><path d="M5,1.4V8.6" stroke="#2a8de2" stroke-width="0.9"/></svg>
<svg class="abs" style="left:547.30px;top:37.60px" width="10" height="10" viewBox="0 0 10 10"><rect x="0.8" y="1" width="8.4" height="8" fill="#f4faff" stroke="#2a8de2" stroke-width="0.7"/><rect x="0.8" y="1" width="8.4" height="1.8" fill="#2a8de2"/><path d="M3,4.2h4v2H6.2L5,7.8L3.8,6.2H3z" fill="#2a8de2"/></svg>
<div class="abs" style="left:560.50px;top:36.10px;width:1px;height:13px;background:#c9c9c9"></div>
<svg class="abs" style="left:566.40px;top:37.60px" width="10" height="10" viewBox="0 0 10 10"><rect x="0.8" y="0.8" width="5.6" height="3.6" fill="#2a8de2"/><path d="M0.8,2.6h5.6M2.7,0.8v3.6M4.6,0.8v3.6" stroke="#8cc4f2" stroke-width="0.4"/><path d="M7.1,0.6l1.6,1.6m0,-1.6l-1.6,1.6" stroke="#556" stroke-width="0.7"/><path d="M7.1,3.4l1.6,1.6m0,-1.6l-1.6,1.6" stroke="#556" stroke-width="0.7"/><path d="M1.6,6.6l1.6,1.6m0,-1.6l-1.6,1.6" stroke="#556" stroke-width="0.7"/><path d="M4.4,6.6l1.6,1.6m0,-1.6l-1.6,1.6" stroke="#556" stroke-width="0.7"/><path d="M7.1,6.6l1.6,1.6m0,-1.6l-1.6,1.6" stroke="#556" stroke-width="0.7"/></svg>
<svg class="abs" style="left:580.90px;top:37.60px" width="10" height="10" viewBox="0 0 10 10"><rect x="0.8" y="0.8" width="5.6" height="3.6" fill="#2a8de2"/><path d="M0.8,2.6h5.6M2.7,0.8v3.6M4.6,0.8v3.6" stroke="#8cc4f2" stroke-width="0.4"/><path d="M1.2,9C3,5 4.4,9 6,6.6S8.4,4.4 9.2,6" fill="none" stroke="#3a3f48" stroke-width="0.8"/></svg>
<svg class="abs" style="left:596.10px;top:37.60px" width="10" height="10" viewBox="0 0 10 10"><rect x="0.8" y="0.8" width="5.6" height="3.6" fill="#2a8de2"/><path d="M0.8,2.6h5.6M2.7,0.8v3.6M4.6,0.8v3.6" stroke="#8cc4f2" stroke-width="0.4"/><path d="M1,7.4H8.8" stroke="#233a7a" stroke-width="0.9"/><path d="M1,6.4v2M8.8,2v6.4" stroke="#233a7a" stroke-width="0.8"/></svg>
<svg class="abs" style="left:610.90px;top:37.60px" width="10" height="10" viewBox="0 0 10 10"><rect x="0.8" y="0.8" width="5.6" height="3.6" fill="#2a8de2"/><path d="M0.8,2.6h5.6M2.7,0.8v3.6M4.6,0.8v3.6" stroke="#8cc4f2" stroke-width="0.4"/><path d="M2,9C3.4,6.4 4.6,8.8 6,7.2S8,6 9.2,6.8" fill="none" stroke="#3a3f48" stroke-width="0.8"/></svg>
<svg class="abs" style="left:625.90px;top:37.60px" width="10" height="10" viewBox="0 0 10 10"><rect x="0.8" y="0.8" width="5.6" height="3.6" fill="#2a8de2"/><path d="M0.8,2.6h5.6M2.7,0.8v3.6M4.6,0.8v3.6" stroke="#8cc4f2" stroke-width="0.4"/><path d="M7.6,0.8v4" stroke="#233a7a" stroke-width="1"/><circle cx="2.4" cy="7.4" r="1.4" fill="none" stroke="#3a3f48" stroke-width="0.7"/><circle cx="7.6" cy="7.4" r="1.4" fill="none" stroke="#3a3f48" stroke-width="0.7"/><path d="M3.8,7.4h2.4" stroke="#3a3f48" stroke-width="0.7"/></svg>
<svg class="abs" style="left:641.00px;top:37.60px" width="10" height="10" viewBox="0 0 10 10"><path d="M1.4,0.8V8.6H9.2" fill="none" stroke="#333" stroke-width="0.9"/><path d="M2.6,8C3,4 6.6,4 7.4,8z" fill="#bfe0fa" stroke="#2a8de2" stroke-width="0.8"/></svg>
<svg class="abs" style="left:655.60px;top:37.60px" width="10" height="10" viewBox="0 0 10 10"><rect x="1.2" y="0.8" width="7.6" height="8.4" fill="#2a8de2"/><path d="M3.6,2.4V9.2M6.2,2.4V9.2M1.2,2.6H8.8" stroke="#9ccdf6" stroke-width="0.5"/></svg>
<svg class="abs" style="left:671.00px;top:37.60px" width="10" height="10" viewBox="0 0 10 10"><rect x="0.8" y="1" width="8.4" height="8" fill="#f4faff" stroke="#2a8de2" stroke-width="0.7"/><rect x="0.8" y="1" width="8.4" height="1.6" fill="#2a8de2"/><path d="M3,4.6L5,7.6L7,4.6" fill="none" stroke="#2a8de2" stroke-width="1.4"/></svg>
<svg class="abs" style="left:686.10px;top:37.60px" width="10" height="10" viewBox="0 0 10 10"><rect x="1.2" y="0.8" width="7.6" height="8.4" fill="#c9ccd1" stroke="#8e9298" stroke-width="0.6"/><rect x="1.2" y="0.8" width="7.6" height="2.4" fill="#8dbfee"/><path d="M3.6,3.2V9.2M6.2,3.2V9.2" stroke="#80858c" stroke-width="0.6"/><rect x="4" y="4.4" width="1.4" height="3.8" fill="#e04a3a"/><rect x="6.6" y="4.4" width="1.4" height="3.8" fill="#2a8de2"/></svg>
<svg class="abs" style="left:699.00px;top:44.90px" width="6" height="4" viewBox="0 0 6 4"><path d="M0.4,0.5H5.6L3,3.4z" fill="#1a1a1a"/></svg>
<div class="abs" style="left:707.00px;top:34.00px;width:1px;height:17.00px;background:#dedede"></div>
<svg class="abs" style="left:709.80px;top:34.50px" width="5" height="16.0" viewBox="0 0 5 16.0"><path d="M1,1.5V14.5M3.4,1.5V14.5" stroke="#c4c4c4" stroke-width="0.9" stroke-dasharray="0.8 1.25" fill="none"/></svg>
<div class="abs" style="left:714.40px;top:35.10px;width:15.00px;height:14.8px;background:#cde5fa;border:0.6px solid #b9dbf8;border-radius:1.8px"></div>
<svg class="abs" style="left:717.00px;top:37.60px" width="10" height="10" viewBox="0 0 10 10"><path d="M0.8,5L4.6,1L8.6,4.4L5,8.6z" fill="#bfe0fa" stroke="#2a8de2" stroke-width="0.9" stroke-linejoin="round"/><path d="M4.6,1L9.2,5.8" stroke="#1d3f78" stroke-width="1.3"/><path d="M2.8,3.2L6.8,6.6" stroke="#2a8de2" stroke-width="0.6"/></svg>
<svg class="abs" style="left:732.30px;top:38.10px" width="9" height="9" viewBox="0 0 10 10"><path d="M1.4,8.6L8.6,1.4M2,2L8,8" stroke="#8a8a8a" stroke-width="0.7"/><path d="M0.8,1h1.8v1.8H0.8zM7.6,0.6h1.8v1.8H7.6zM0.6,7.6h1.8v1.8H0.6z" fill="#6a6a6a"/></svg>
<div class="abs" style="left:744.40px;top:35.10px;width:14.60px;height:14.8px;background:#cde5fa;border:0.6px solid #b9dbf8;border-radius:1.8px"></div>
<svg class="abs" style="left:747.30px;top:38.10px" width="9" height="9" viewBox="0 0 10 10"><path d="M1,2H9V6.4C9,7.6 8,8.4 6.6,8.4H3.4C2,8.4 1,7.6 1,6.4z" fill="#f4faff" stroke="#2a8de2" stroke-width="0.8"/><path d="M5,2H9V6.4C9,7.6 8,8.4 6.6,8.4H5z" fill="#1c2f52"/></svg>
<svg class="abs" style="left:761.75px;top:37.60px" width="10" height="10" viewBox="0 0 10 10"><rect x="2" y="0.6" width="7.6" height="5.6" fill="#2a8de2"/><path d="M2,6.2L0.6,8.8" stroke="#1d3f78" stroke-width="1"/><path d="M7,6.6l1.2,2.2l1.2,-2.2z" fill="#1d3f78"/></svg>
<svg class="abs" style="left:777.00px;top:37.60px" width="10" height="10" viewBox="0 0 10 10"><path d="M1,1L7,7" stroke="#1a1a1a" stroke-width="1.3"/><path d="M7.8,7.8L3.8,6.8L6.8,3.8z" fill="#1a1a1a"/><rect x="8" y="8" width="1.4" height="1.4" fill="#1d5fb0"/></svg>
<svg class="abs" style="left:791.50px;top:37.60px" width="10" height="10" viewBox="0 0 10 10"><path d="M1,9H9.4M1,9L9,1.4M1,9L9.4,4.2M1,9L9.4,6.8M1,9L5.4,0.8M1,9L2,0.8" stroke="#8e8e8e" stroke-width="0.6" fill="none"/></svg>
<div class="abs" style="left:805.00px;top:36.10px;width:1px;height:13px;background:#c9c9c9"></div>
<svg class="abs" style="left:810.90px;top:37.60px" width="10" height="10" viewBox="0 0 10 10"><path d="M3.6,0.8H9V9H1V6.4H3.6z" fill="#d6d6d6" stroke="#a4a4a4" stroke-width="0.6"/><path d="M1,7.6H9M3.6,3.4H9M3.6,5H9" stroke="#a4a4a4" stroke-width="0.5"/></svg>
<svg class="abs" style="left:825.75px;top:37.60px" width="10" height="10" viewBox="0 0 10 10"><rect x="0.8" y="0.8" width="7.6" height="8.4" fill="#6a6e74"/><path d="M0.8,3.4H8.4M0.8,6H8.4M3.4,0.8V9.2M6,0.8V9.2" stroke="#d8d8d8" stroke-width="0.5"/><ellipse cx="6.6" cy="6.9" rx="2.9" ry="1.9" fill="#2c2c2c"/><circle cx="6.6" cy="6.9" r="0.8" fill="#9a9a9a"/></svg>
<div class="abs" style="left:839.00px;top:36.10px;width:1px;height:13px;background:#c9c9c9"></div>
<svg class="abs" style="left:844.90px;top:37.60px" width="10" height="10" viewBox="0 0 10 10"><path d="M0.8,0.8l1.6,1.6m0,-1.6l-1.6,1.6" stroke="#2a8de2" stroke-width="0.7"/><path d="M6.2,0.4l1.6,1.6m0,-1.6l-1.6,1.6" stroke="#2a8de2" stroke-width="0.7"/><path d="M0.6,5.8l1.6,1.6m0,-1.6l-1.6,1.6" stroke="#2a8de2" stroke-width="0.7"/><ellipse cx="6" cy="6.4" rx="2.9" ry="1.9" fill="#4a4a4a"/><circle cx="6" cy="6.4" r="0.8" fill="#aaa"/></svg>
<svg class="abs" style="left:860.10px;top:37.60px" width="10" height="10" viewBox="0 0 10 10"><path d="M1.4,8L5,6.6L8.6,1.6" fill="none" stroke="#2a8de2" stroke-width="0.8" stroke-dasharray="1.2 0.8"/><path d="M0.8,7.2l1.6,1.6m0,-1.6l-1.6,1.6" stroke="#2a8de2" stroke-width="0.7"/><path d="M3.8,6.0l1.6,1.6m0,-1.6l-1.6,1.6" stroke="#2a8de2" stroke-width="0.7"/><path d="M6.2,3.4l1.6,1.6m0,-1.6l-1.6,1.6" stroke="#2a8de2" stroke-width="0.7"/><path d="M7.6,0.8l1.6,1.6m0,-1.6l-1.6,1.6" stroke="#2a8de2" stroke-width="0.7"/></svg>
<div class="abs" style="left:872.40px;top:35.10px;width:15.00px;height:14.8px;background:#cde5fa;border:0.6px solid #b9dbf8;border-radius:1.8px"></div>
<svg class="abs" style="left:875.00px;top:37.60px" width="10" height="10" viewBox="0 0 10 10"><path d="M1.2,1.0l1.6,1.6m0,-1.6l-1.6,1.6" stroke="#2a8de2" stroke-width="0.7"/><path d="M6.6,0.6l1.6,1.6m0,-1.6l-1.6,1.6" stroke="#2a8de2" stroke-width="0.7"/><path d="M1.0,6.2l1.6,1.6m0,-1.6l-1.6,1.6" stroke="#2a8de2" stroke-width="0.7"/><ellipse cx="6.2" cy="6.6" rx="3" ry="2" fill="#222"/><circle cx="6.2" cy="6.6" r="0.8" fill="#9a9a9a"/></svg>
<svg class="abs" style="left:890.20px;top:37.60px" width="10" height="10" viewBox="0 0 10 10"><path d="M0.8,8.4H4.4C6.6,8.4 6.4,4.6 9.2,2.4" fill="none" stroke="#2468b4" stroke-width="1.2"/><path d="M0.6,7.6l1.6,1.6m0,-1.6l-1.6,1.6" stroke="#2a8de2" stroke-width="0.7"/><path d="M3.8,7.4l1.6,1.6m0,-1.6l-1.6,1.6" stroke="#2a8de2" stroke-width="0.7"/><path d="M7.8,1.8l1.6,1.6m0,-1.6l-1.6,1.6" stroke="#2a8de2" stroke-width="0.7"/></svg>
<svg class="abs" style="left:902.60px;top:44.90px" width="6" height="4" viewBox="0 0 6 4"><path d="M0.4,0.5H5.6L3,3.4z" fill="#1a1a1a"/></svg>
<div class="abs" style="left:910.50px;top:34.00px;width:1px;height:17.00px;background:#dedede"></div>
<svg class="abs" style="left:912.80px;top:34.50px" width="5" height="16.0" viewBox="0 0 5 16.0"><path d="M1,1.5V14.5M3.4,1.5V14.5" stroke="#c4c4c4" stroke-width="0.9" stroke-dasharray="0.8 1.25" fill="none"/></svg>
<div class="abs" style="left:918.20px;top:35.10px;width:14.80px;height:14.8px;background:#cde5fa;border:0.6px solid #b9dbf8;border-radius:1.8px"></div>
<svg class="abs" style="left:920.70px;top:37.60px" width="10" height="10" viewBox="0 0 10 10"><rect x="0.8" y="1" width="8" height="7" fill="#f4faff" stroke="#2a8de2" stroke-width="0.8"/><rect x="0.8" y="1" width="8" height="1.8" fill="#2a8de2"/><path d="M2,5.6h3" stroke="#2a8de2" stroke-width="0.8"/><ellipse cx="7" cy="7.4" rx="2.6" ry="1.7" fill="#333"/><circle cx="7" cy="7.4" r="0.7" fill="#bbb"/></svg>
<div class="abs" style="left:934.10px;top:36.10px;width:1px;height:13px;background:#c9c9c9"></div>
<svg class="abs" style="left:939.90px;top:37.60px" width="10" height="10" viewBox="0 0 10 10"><rect x="2.2" y="2.6" width="5.6" height="5.6" fill="#f0f0f0" stroke="#c4c4c4" stroke-width="0.7"/><path d="M2.2,0.8V9.4M7.8,0.8V9.4M0.6,2.6H9.4" stroke="#cfcfcf" stroke-width="0.5"/></svg>
<div class="abs" style="left:953.10px;top:36.10px;width:1px;height:13px;background:#c9c9c9"></div>
<div class="abs" style="left:956.90px;top:35.10px;width:14.80px;height:14.8px;background:#cde5fa;border:0.6px solid #b9dbf8;border-radius:1.8px"></div>
<svg class="abs" style="left:959.40px;top:37.60px" width="10" height="10" viewBox="0 0 10 10"><rect x="2" y="2.4" width="6" height="6" fill="#bfe0fa" stroke="#2a8de2" stroke-width="1"/><path d="M2,0.8V2.4M8,0.8V2.4" stroke="#2a8de2" stroke-width="0.6"/></svg>
<svg class="abs" style="left:974.25px;top:37.60px" width="10" height="10" viewBox="0 0 10 10"><rect x="2.4" y="2.6" width="5.4" height="5.4" fill="#f4faff" stroke="#a8d2f6" stroke-width="0.7"/><rect x="1.0" y="1.2" width="1.4" height="1.4" fill="#2a8de2"/><rect x="4.4" y="0.8" width="1.4" height="1.4" fill="#2a8de2"/><rect x="7.8" y="1.2" width="1.4" height="1.4" fill="#2a8de2"/><rect x="1.0" y="4.6" width="1.4" height="1.4" fill="#2a8de2"/><rect x="1.0" y="7.8" width="1.4" height="1.4" fill="#2a8de2"/><rect x="7.8" y="4.6" width="1.4" height="1.4" fill="#2a8de2"/><rect x="7.8" y="7.8" width="1.4" height="1.4" fill="#2a8de2"/></svg>
<svg class="abs" style="left:989.00px;top:37.60px" width="10" height="10" viewBox="0 0 10 10"><rect x="2.4" y="2.6" width="5.4" height="5.4" fill="#f4faff" stroke="#a8d2f6" stroke-width="0.7"/><path d="M2.4,0.6V9.2M7.8,0.6V9.2M0.8,2.6H9.4" stroke="#a8d2f6" stroke-width="0.5"/><rect x="1.2" y="1.4" width="1.3" height="1.3" fill="#2a8de2"/><rect x="7.6" y="0.8" width="1.3" height="1.3" fill="#2a8de2"/><rect x="1.0" y="7.8" width="1.3" height="1.3" fill="#2a8de2"/></svg>
<svg class="abs" style="left:1002.25px;top:44.90px" width="6" height="4" viewBox="0 0 6 4"><path d="M0.4,0.5H5.6L3,3.4z" fill="#1a1a1a"/></svg>
<div class="abs" style="left:1010.20px;top:34.00px;width:1px;height:17.00px;background:#dedede"></div>
<svg class="abs" style="left:1.80px;top:53.00px" width="5" height="16.0" viewBox="0 0 5 16.0"><path d="M1,1.5V14.5M3.4,1.5V14.5" stroke="#c4c4c4" stroke-width="0.9" stroke-dasharray="0.8 1.25" fill="none"/></svg>
<svg class="abs" style="left:9.40px;top:56.40px" width="10" height="10" viewBox="0 0 10 10"><path d="M1,1L6.6,7M6.6,1L1,7" stroke="#2b4a8e" stroke-width="1.7"/><path d="M6.9,4.6V9.4M4.5,7H9.3" stroke="#68c244" stroke-width="1.6"/></svg>
<svg class="abs" style="left:24.40px;top:56.40px" width="10" height="10" viewBox="0 0 10 10"><path d="M1,1L6.6,7M6.6,1L1,7" stroke="#7a7a7a" stroke-width="1.5"/><path d="M5.4,5.6L8.8,9M8.8,5.6L5.4,9" stroke="#8c8c8c" stroke-width="0.9"/></svg>
<div class="abs" style="left:37.60px;top:54.90px;width:1px;height:13px;background:#c9c9c9"></div>
<svg class="abs" style="left:43.75px;top:56.40px" width="10" height="10" viewBox="0 0 10 10"><path d="M1.6,1.6L8.4,8.4" stroke="#777" stroke-width="0.6" stroke-dasharray="1 1"/><circle cx="1.8" cy="1.8" r="0.7" fill="#555"/><circle cx="5" cy="5" r="0.9" fill="#555"/><circle cx="8.2" cy="8.2" r="0.8" fill="#444"/></svg>
<svg class="abs" style="left:58.40px;top:56.40px" width="10" height="10" viewBox="0 0 10 10"><path d="M2.4,8.6L8.8,4" stroke="#777" stroke-width="0.6"/><circle cx="2.4" cy="8.6" r="0.7" fill="#555"/><circle cx="8.8" cy="4" r="0.8" fill="#444"/><circle cx="1.8" cy="4.2" r="0.6" fill="#777"/><circle cx="4.2" cy="2.8" r="0.7" fill="#666"/><circle cx="6.2" cy="1" r="0.6" fill="#888"/><circle cx="2.2" cy="1.2" r="0.5" fill="#888"/><circle cx="5.6" cy="5.2" r="0.6" fill="#666"/></svg>
<svg class="abs" style="left:71.40px;top:63.70px" width="6" height="4" viewBox="0 0 6 4"><path d="M0.4,0.5H5.6L3,3.4z" fill="#1a1a1a"/></svg>
<div class="abs" style="left:78.90px;top:52.00px;width:1px;height:18.00px;background:#dedede"></div>
<svg class="abs" style="left:82.00px;top:53.00px" width="5" height="16.0" viewBox="0 0 5 16.0"><path d="M1,1.5V14.5M3.4,1.5V14.5" stroke="#c4c4c4" stroke-width="0.9" stroke-dasharray="0.8 1.25" fill="none"/></svg>
<svg class="abs" style="left:89.30px;top:56.40px" width="10" height="10" viewBox="0 0 10 10"><path d="M8,1.4C4,0.6 2.6,2.6 5,4.8C7.4,7 5.6,9 1.6,8" fill="none" stroke="#2a8de2" stroke-width="1"/><circle cx="8" cy="1.5" r="0.8" fill="#2a8de2"/><circle cx="1.8" cy="8" r="0.8" fill="#2a8de2"/></svg>
<svg class="abs" style="left:104.00px;top:56.40px" width="10" height="10" viewBox="0 0 10 10"><path d="M1.4,6.6L8.6,3.2M3.2,1.6L6.8,8.6" stroke="#2a8de2" stroke-width="0.8" stroke-dasharray="1.4 0.8"/><circle cx="1.4" cy="6.6" r="0.9" fill="#1c6fc4"/><circle cx="8.6" cy="3.2" r="0.9" fill="#1c6fc4"/><circle cx="3.2" cy="1.6" r="0.9" fill="#1c6fc4"/><circle cx="6.8" cy="8.6" r="0.9" fill="#1c6fc4"/></svg>
<svg class="abs" style="left:119.00px;top:56.40px" width="10" height="10" viewBox="0 0 10 10"><path d="M5,1V9" stroke="#2a8de2" stroke-width="0.9"/><path d="M2,3.4C4,2 6,4.8 8.4,3.4" fill="none" stroke="#2a8de2" stroke-width="0.9"/><circle cx="5.0" cy="1.2" r="0.8" fill="#1c6fc4"/><circle cx="5.0" cy="8.8" r="0.8" fill="#1c6fc4"/><circle cx="1.8" cy="3.6" r="0.8" fill="#1c6fc4"/><circle cx="8.4" cy="3.4" r="0.8" fill="#1c6fc4"/></svg>
<svg class="abs" style="left:134.25px;top:56.40px" width="10" height="10" viewBox="0 0 10 10"><circle cx="5" cy="5" r="3" fill="none" stroke="#2a8de2" stroke-width="1.2"/><path d="M0.6,0.6l1.6,1.6m0,-1.6l-1.6,1.6" stroke="#1c6fc4" stroke-width="0.7"/><path d="M7.8,0.6l1.6,1.6m0,-1.6l-1.6,1.6" stroke="#1c6fc4" stroke-width="0.7"/><path d="M0.6,7.8l1.6,1.6m0,-1.6l-1.6,1.6" stroke="#1c6fc4" stroke-width="0.7"/><path d="M7.8,7.8l1.6,1.6m0,-1.6l-1.6,1.6" stroke="#1c6fc4" stroke-width="0.7"/></svg>
<svg class="abs" style="left:149.25px;top:56.40px" width="10" height="10" viewBox="0 0 10 10"><path d="M1.6,8.4L5,5.4L8.4,8.4M5,5.4L7.4,1.6" fill="none" stroke="#2a8de2" stroke-width="1"/><circle cx="1.6" cy="8.4" r="1" fill="#1c5fa8"/><circle cx="5.0" cy="5.4" r="1" fill="#1c5fa8"/><circle cx="8.4" cy="8.4" r="1" fill="#1c5fa8"/><circle cx="7.4" cy="1.6" r="1" fill="#1c5fa8"/></svg>
<svg class="abs" style="left:164.00px;top:56.40px" width="10" height="10" viewBox="0 0 10 10"><path d="M3,1.4C1.4,3.4 4.4,5 2.2,8.4M7.8,1.4C6,3.6 8.8,5.4 6.8,8.4" fill="none" stroke="#cdcdcd" stroke-width="0.7"/></svg>
<svg class="abs" style="left:176.90px;top:63.70px" width="6" height="4" viewBox="0 0 6 4"><path d="M0.4,0.5H5.6L3,3.4z" fill="#1a1a1a"/></svg>
<div class="abs" style="left:185.00px;top:52.00px;width:1px;height:18.00px;background:#dedede"></div>
<svg class="abs" style="left:188.00px;top:53.00px" width="5" height="16.0" viewBox="0 0 5 16.0"><path d="M1,1.5V14.5M3.4,1.5V14.5" stroke="#c4c4c4" stroke-width="0.9" stroke-dasharray="0.8 1.25" fill="none"/></svg>
<svg class="abs" style="left:194.90px;top:56.40px" width="10" height="10" viewBox="0 0 10 10"><rect x="1" y="1.2" width="5.8" height="5.4" fill="#f6f6f6" stroke="#777" stroke-width="0.8"/><path d="M9,3L5,8.2" stroke="#eba12e" stroke-width="1.5"/><path d="M5,8.2l-0.8,1.2" stroke="#333" stroke-width="0.8"/></svg>
<svg class="abs" style="left:210.10px;top:56.40px" width="10" height="10" viewBox="0 0 10 10"><rect x="1" y="1.2" width="5.8" height="5.4" fill="#f6f6f6" stroke="#777" stroke-width="0.8"/><path d="M5,5.2l3.8,3.8M8.8,5.2L5,9" stroke="#e0262c" stroke-width="1.2"/></svg>
<div class="abs" style="left:223.10px;top:54.90px;width:1px;height:13px;background:#c9c9c9"></div>
<svg class="abs" style="left:229.00px;top:56.40px" width="10" height="10" viewBox="0 0 10 10"><rect x="1" y="1.4" width="4.6" height="4.6" fill="#3a3a3a"/><path d="M4,3.6h3.4l1.6,1.6v3.6h-5z" fill="#ecebfa" stroke="#34308e" stroke-width="0.9"/></svg>
<svg class="abs" style="left:244.00px;top:56.40px" width="10" height="10" viewBox="0 0 10 10"><rect x="1" y="1.8" width="6.6" height="7" fill="#9c9566" stroke="#6e6a4a" stroke-width="0.5"/><rect x="2.8" y="0.8" width="3" height="1.8" fill="#555"/><path d="M4.6,4.4h3l1.4,1.4v3.4h-4.4z" fill="#ecebfa" stroke="#34308e" stroke-width="0.8"/></svg>
<svg class="abs" style="left:259.40px;top:56.40px" width="10" height="10" viewBox="0 0 10 10"><path d="M1,8.6H8.6V2" fill="none" stroke="#8a8f96" stroke-width="0.7"/><path d="M1,7H5.6V4.2H8" fill="none" stroke="#a8acb2" stroke-width="0.7"/><ellipse cx="3.4" cy="6.6" rx="2.2" ry="1" fill="none" stroke="#9aa" stroke-width="0.5"/><rect x="7" y="0.8" width="1.8" height="1.8" fill="#2a8de2"/></svg>
<svg class="abs" style="left:273.50px;top:56.40px" width="10" height="10" viewBox="0 0 10 10"><path d="M1,5.4L4.4,3.8L7.6,9M4.4,3.8L6,1" fill="none" stroke="#555" stroke-width="0.7" stroke-dasharray="1.3 0.7"/><circle cx="4.6" cy="4" r="1" fill="#d42a2a"/><circle cx="1.2" cy="5.4" r="0.6" fill="#444"/><circle cx="7.4" cy="8.8" r="0.6" fill="#444"/></svg>
<svg class="abs" style="left:288.10px;top:56.40px" width="10" height="10" viewBox="0 0 10 10"><path d="M1.4,1.4H8.4M2.4,1.4L1.6,8.8M7.4,1.4L8.4,8.8M5,3L3.4,8" fill="none" stroke="#444" stroke-width="0.8"/><rect x="2.6" y="1.6" width="4.6" height="3" fill="#555"/><circle cx="4.6" cy="3.4" r="1" fill="#d42a2a"/></svg>
<svg class="abs" style="left:303.50px;top:56.40px" width="10" height="10" viewBox="0 0 10 10"><path d="M0.8,1.6L3.6,5.6H6.4L9.2,1.6M3.6,5.6L2.6,9M6.4,5.6L7.4,9" fill="none" stroke="#c83232" stroke-width="0.8"/><circle cx="3.6" cy="5.6" r="0.9" fill="#c42a2a"/><circle cx="6.4" cy="5.6" r="0.9" fill="#c42a2a"/><path d="M0.2,0.8l1.6,1.6m0,-1.6l-1.6,1.6" stroke="#444" stroke-width="0.7"/><path d="M8.2,0.8l1.6,1.6m0,-1.6l-1.6,1.6" stroke="#444" stroke-width="0.7"/></svg>
<svg class="abs" style="left:318.90px;top:56.40px" width="10" height="10" viewBox="0 0 10 10"><rect x="1.6" y="1.4" width="6.8" height="6.8" fill="#fafafa" stroke="#aaa" stroke-width="0.6"/><path d="M1,9.2L9,0.8" stroke="#222" stroke-width="1.2"/><circle cx="6.4" cy="3.6" r="1.1" fill="#e02a2a"/><circle cx="3.8" cy="6.4" r="1" fill="#e02a2a"/></svg>
<svg class="abs" style="left:333.50px;top:56.40px" width="10" height="10" viewBox="0 0 10 10"><path d="M1,9L9,1.2" stroke="#333" stroke-width="0.9" stroke-dasharray="1.6 0.8"/><circle cx="5" cy="5.1" r="0.8" fill="#222"/></svg>
<svg class="abs" style="left:348.75px;top:56.40px" width="10" height="10" viewBox="0 0 10 10"><path d="M1.4,1L9,8.6M1,1.8L8.4,9.2" stroke="#8a8f96" stroke-width="0.7"/><path d="M8.6,1.4L1.4,8.6" stroke="#8a8f96" stroke-width="0.9"/><path d="M0.8,0.8l1.8,0.4l-1.4,1.4zM9.2,9.2l-1.8,-0.4l1.4,-1.4z" fill="#2a8de2"/></svg>
<svg class="abs" style="left:363.75px;top:56.40px" width="10" height="10" viewBox="0 0 10 10"><path d="M1.4,8.6L8.6,1M2.2,9.2L9.2,1.8" stroke="#8a8f96" stroke-width="0.7"/><path d="M1.4,1.4L8.6,8.6" stroke="#8a8f96" stroke-width="0.9"/><path d="M0.8,0.8l1.8,0.4l-1.4,1.4zM9.2,9.2l-1.8,-0.4l1.4,-1.4z" fill="#2a8de2"/></svg>
<div class="abs" style="left:377.00px;top:54.90px;width:1px;height:13px;background:#c9c9c9"></div>
<svg class="abs" style="left:383.00px;top:56.40px" width="10" height="10" viewBox="0 0 10 10"><rect x="3" y="1" width="5.6" height="5.6" fill="#fafafa" stroke="#b8bcc2" stroke-width="0.7"/><rect x="0.8" y="3.6" width="5.4" height="5.4" fill="#2a8de2"/><rect x="2" y="4.8" width="3" height="3" fill="#7cbcf0"/></svg>
<svg class="abs" style="left:410.50px;top:54.80px" width="6" height="12" viewBox="0 0 6 12"><path d="M0.8,0.8L3,2.8L5.2,0.8M0.8,3.4L3,5.4L5.2,3.4" fill="none" stroke="#333" stroke-width="0.8"/><path d="M0.4,8.8H5.6L3,11.4z" fill="#1a1a1a"/></svg>
<div class="abs" style="left:417.90px;top:52.00px;width:1px;height:18.00px;background:#dedede"></div>
<svg class="abs" style="left:420.90px;top:53.00px" width="5" height="16.0" viewBox="0 0 5 16.0"><path d="M1,1.5V14.5M3.4,1.5V14.5" stroke="#c4c4c4" stroke-width="0.9" stroke-dasharray="0.8 1.25" fill="none"/></svg>
<svg class="abs" style="left:428.40px;top:56.40px" width="10" height="10" viewBox="0 0 10 10"><path d="M1,2.2L4,1L6,2.8L3.4,4z" fill="#bfe0fa" stroke="#2a8de2" stroke-width="0.6"/><path d="M4,3.6C4.4,2.6 7.4,2.6 7.6,4.4V8.2C7.6,9.4 4.2,9.4 4.2,8.2L3.4,5.4z" fill="#1a1a1a"/></svg>
<svg class="abs" style="left:443.40px;top:56.40px" width="10" height="10" viewBox="0 0 10 10"><path d="M1,2L4.4,0.8L7,3.4L3.4,4.8z" fill="#bfe0fa" stroke="#2a8de2" stroke-width="0.6"/><path d="M6.4,4.8V9.2M4.2,7H8.6" stroke="#5a5a5a" stroke-width="0.9"/></svg>
<svg class="abs" style="left:458.40px;top:56.40px" width="10" height="10" viewBox="0 0 10 10"><path d="M1,2L4.4,0.8L7,3.4L3.4,4.8z" fill="#bfe0fa" stroke="#2a8de2" stroke-width="0.6"/><rect x="3.6" y="4.6" width="5.4" height="4.6" fill="#d8ecfc" stroke="#2a8de2" stroke-width="0.7"/><path d="M3.6,6.8H9M6.2,4.6V9.2" stroke="#2a8de2" stroke-width="0.5"/></svg>
<svg class="abs" style="left:473.00px;top:56.40px" width="10" height="10" viewBox="0 0 10 10"><path d="M1,2L4.4,0.8L7,3.4L3.4,4.8z" fill="#bfe0fa" stroke="#2a8de2" stroke-width="0.6"/><circle cx="7.2" cy="7.4" r="1.4" fill="#fff" stroke="#2a8de2" stroke-width="0.7"/></svg>
<svg class="abs" style="left:488.40px;top:56.40px" width="10" height="10" viewBox="0 0 10 10"><path d="M1,2L4.4,0.8L7,3.4L3.4,4.8z" fill="#bfe0fa" stroke="#2a8de2" stroke-width="0.6"/><path d="M4.4,5H9M4.4,6.6H9M4.4,8.2H9M8.6,4.6V9" stroke="#555" stroke-width="0.7"/></svg>
<svg class="abs" style="left:501.00px;top:63.70px" width="6" height="4" viewBox="0 0 6 4"><path d="M0.4,0.5H5.6L3,3.4z" fill="#1a1a1a"/></svg>
<div class="abs" style="left:508.50px;top:52.00px;width:1px;height:18.00px;background:#dedede"></div>
<svg class="abs" style="left:511.60px;top:53.00px" width="5" height="16.0" viewBox="0 0 5 16.0"><path d="M1,1.5V14.5M3.4,1.5V14.5" stroke="#c4c4c4" stroke-width="0.9" stroke-dasharray="0.8 1.25" fill="none"/></svg>
<svg class="abs" style="left:519.25px;top:56.40px" width="10" height="10" viewBox="0 0 10 10"><path d="M0.8,5C2.6,2.6 7.4,2.6 9.2,5C7.4,7.4 2.6,7.4 0.8,5z" fill="#f4faff" stroke="#2a8de2" stroke-width="0.9"/></svg>
<svg class="abs" style="left:533.75px;top:56.40px" width="10" height="10" viewBox="0 0 10 10"><path d="M0.8,1.8L4.4,0.8L9,1.8V7L5,9.2L1.4,7.4z" fill="#2a7fd0"/><path d="M0.8,1.8L5,3L9,1.8M5,3V9.2" fill="none" stroke="#8cc4f2" stroke-width="0.5"/><path d="M0.8,1.8L4.4,0.8L9,1.8L5,3z" fill="#5aa8ea"/></svg>
<svg class="abs" style="left:548.50px;top:56.40px" width="10" height="10" viewBox="0 0 10 10"><path d="M1.8,2V8C1.8,9.6 8.2,9.6 8.2,8V2z" fill="#2384d8"/><ellipse cx="5" cy="2" rx="3.2" ry="1.3" fill="#62b0f0" stroke="#1e78c8" stroke-width="0.4"/></svg>
<svg class="abs" style="left:563.50px;top:56.40px" width="10" height="10" viewBox="0 0 10 10"><path d="M1,8C1.6,5 3.6,0.8 5,0.8S8.4,5 9,8C8,9.6 2,9.6 1,8z" fill="#e4f2fe" stroke="#2a8de2" stroke-width="0.8"/></svg>
<svg class="abs" style="left:578.60px;top:56.40px" width="10" height="10" viewBox="0 0 10 10"><circle cx="5" cy="5" r="4.2" fill="#bfe0fa" stroke="#2a8de2" stroke-width="0.9"/><path d="M5,0.8V9.2M0.8,5H9.2M2,2L8,8M8,2L2,8" stroke="#2a8de2" stroke-width="0.6"/></svg>
<div class="abs" style="left:591.90px;top:54.90px;width:1px;height:13px;background:#c9c9c9"></div>
<svg class="abs" style="left:597.60px;top:56.40px" width="10" height="10" viewBox="0 0 10 10"><path d="M3.6,0.8C5.2,2.2 6.2,3.6 6.2,4.9C6.2,6.2 5.2,7.8 3.6,9.2C2,7.8 1,6.2 1,4.9C1,3.6 2,2.2 3.6,0.8z" fill="#fafafa" stroke="#bdbdbd" stroke-width="0.6"/><path d="M3.6,0.8V9.2M1,4.9H6.2M2.3,2.2V7.8M4.9,2.2V7.8M1.5,3.2H5.7M1.5,6.6H5.7" stroke="#bdbdbd" stroke-width="0.4"/><path d="M6,1.6C8.6,1.2 9,3.4 8.2,4.6M8,6.4l1.4,1.6M9.4,6.4L8,8" fill="none" stroke="#555" stroke-width="0.7"/></svg>
<svg class="abs" style="left:612.60px;top:56.40px" width="10" height="10" viewBox="0 0 10 10"><path d="M3.6,0.8C5.2,2.2 6.2,3.6 6.2,4.9C6.2,6.2 5.2,7.8 3.6,9.2C2,7.8 1,6.2 1,4.9C1,3.6 2,2.2 3.6,0.8z" fill="#fafafa" stroke="#2a8de2" stroke-width="0.6"/><path d="M3.6,0.8V9.2M1,4.9H6.2M2.3,2.2V7.8M4.9,2.2V7.8M1.5,3.2H5.7M1.5,6.6H5.7" stroke="#2a8de2" stroke-width="0.4"/><circle cx="6.6" cy="4.4" r="1.3" fill="#2468b4"/><path d="M4.6,8.6L9.2,6.6" stroke="#2a8de2" stroke-width="1.1"/><path d="M6,2l1.6,0.2" stroke="#333" stroke-width="0.7"/></svg>
<svg class="abs" style="left:627.60px;top:56.40px" width="10" height="10" viewBox="0 0 10 10"><path d="M3.6,0.8C5.2,2.2 6.2,3.6 6.2,4.9C6.2,6.2 5.2,7.8 3.6,9.2C2,7.8 1,6.2 1,4.9C1,3.6 2,2.2 3.6,0.8z" fill="#fafafa" stroke="#d4d4d4" stroke-width="0.6"/><path d="M3.6,0.8V9.2M1,4.9H6.2M2.3,2.2V7.8M4.9,2.2V7.8M1.5,3.2H5.7M1.5,6.6H5.7" stroke="#d4d4d4" stroke-width="0.4"/><path d="M5.6,2.4C8,1.8 9.2,3.6 8.4,5.2" fill="none" stroke="#aaa" stroke-width="0.7"/><rect x="7" y="6" width="2" height="2.4" fill="none" stroke="#ccc" stroke-width="0.5"/></svg>
<svg class="abs" style="left:643.20px;top:56.40px" width="10" height="10" viewBox="0 0 10 10"><path d="M3.6,0.8C5.2,2.2 6.2,3.6 6.2,4.9C6.2,6.2 5.2,7.8 3.6,9.2C2,7.8 1,6.2 1,4.9C1,3.6 2,2.2 3.6,0.8z" fill="#fafafa" stroke="#c8c8c8" stroke-width="0.6"/><path d="M3.6,0.8V9.2M1,4.9H6.2M2.3,2.2V7.8M4.9,2.2V7.8M1.5,3.2H5.7M1.5,6.6H5.7" stroke="#c8c8c8" stroke-width="0.4"/><path d="M7,1.4l1.6,0" stroke="#bbb" stroke-width="0.6"/></svg>
<svg class="abs" style="left:658.20px;top:56.40px" width="10" height="10" viewBox="0 0 10 10"><path d="M3.6,0.8C5.2,2.2 6.2,3.6 6.2,4.9C6.2,6.2 5.2,7.8 3.6,9.2C2,7.8 1,6.2 1,4.9C1,3.6 2,2.2 3.6,0.8z" fill="#fafafa" stroke="#c0c0c0" stroke-width="0.6"/><path d="M3.6,0.8V9.2M1,4.9H6.2M2.3,2.2V7.8M4.9,2.2V7.8M1.5,3.2H5.7M1.5,6.6H5.7" stroke="#c0c0c0" stroke-width="0.4"/><path d="M6,3.4L8.8,1.2" stroke="#222" stroke-width="1.6"/></svg>
<svg class="abs" style="left:672.50px;top:56.40px" width="10" height="10" viewBox="0 0 10 10"><circle cx="5" cy="5" r="4" fill="none" stroke="#c0c0c0" stroke-width="0.8"/><path d="M5,1V9M1,5H9M2.2,2.2L7.8,7.8M7.8,2.2L2.2,7.8" stroke="#c8c8c8" stroke-width="0.5"/></svg>
<svg class="abs" style="left:687.50px;top:56.40px" width="10" height="10" viewBox="0 0 10 10"><path d="M3.6,0.8C5.2,2.2 6.2,3.6 6.2,4.9C6.2,6.2 5.2,7.8 3.6,9.2C2,7.8 1,6.2 1,4.9C1,3.6 2,2.2 3.6,0.8z" fill="#fafafa" stroke="#b4b4b4" stroke-width="0.6"/><path d="M3.6,0.8V9.2M1,4.9H6.2M2.3,2.2V7.8M4.9,2.2V7.8M1.5,3.2H5.7M1.5,6.6H5.7" stroke="#b4b4b4" stroke-width="0.4"/><path d="M5.8,5.6L9.2,9M9.2,5.6L5.8,9" stroke="#666" stroke-width="1.1"/></svg>
<div class="abs" style="left:701.00px;top:54.90px;width:1px;height:13px;background:#c9c9c9"></div>
<svg class="abs" style="left:706.90px;top:56.40px" width="10" height="10" viewBox="0 0 10 10"><circle cx="2.4" cy="2.2" r="1.5" fill="none" stroke="#777" stroke-width="0.7"/><path d="M4,8.8L8.8,3.2" stroke="#999" stroke-width="1.1"/></svg>
<svg class="abs" style="left:721.90px;top:56.40px" width="10" height="10" viewBox="0 0 10 10"><circle cx="2.4" cy="2.2" r="1.5" fill="none" stroke="#777" stroke-width="0.7"/><path d="M4.6,4.8L8.8,9M8.8,4.8L4.6,9" stroke="#666" stroke-width="1"/></svg>
<svg class="abs" style="left:736.75px;top:56.40px" width="10" height="10" viewBox="0 0 10 10"><path d="M1.4,3L4.4,1L8.6,2.2V8L5.4,9.2L1.4,8z" fill="#e8e8e8" stroke="#bcbcbc" stroke-width="0.6"/><path d="M4.4,1V7L1.4,8M4.4,7L8.6,8" fill="none" stroke="#c4c4c4" stroke-width="0.5"/></svg>
<svg class="abs" style="left:751.50px;top:56.40px" width="10" height="10" viewBox="0 0 10 10"><path d="M6.4,0.8L1,6.8H6.4V0.8" fill="none" stroke="#a4a4a4" stroke-width="0.9"/><path d="M6.4,6.8V9" stroke="#a4a4a4" stroke-width="0.9"/><rect x="7" y="6.6" width="2.2" height="2.2" fill="#b0b0b0"/></svg>
<div class="abs" style="left:764.90px;top:54.90px;width:1px;height:13px;background:#c9c9c9"></div>
<svg class="abs" style="left:770.75px;top:56.40px" width="10" height="10" viewBox="0 0 10 10"><path d="M3.6,0.8C5.2,2.2 6.2,3.6 6.2,4.9C6.2,6.2 5.2,7.8 3.6,9.2C2,7.8 1,6.2 1,4.9C1,3.6 2,2.2 3.6,0.8z" fill="#fafafa" stroke="#b4b4b4" stroke-width="0.6"/><path d="M3.6,0.8V9.2M1,4.9H6.2M2.3,2.2V7.8M4.9,2.2V7.8M1.5,3.2H5.7M1.5,6.6H5.7" stroke="#b4b4b4" stroke-width="0.4"/><path d="M4.6,4C5,3 8,3 8.2,4.6V8.2C8.2,9.4 5,9.4 5,8.2L4.2,5.6z" fill="#1a1a1a"/></svg>
<svg class="abs" style="left:785.50px;top:56.40px" width="10" height="10" viewBox="0 0 10 10"><path d="M3.6,0.8C5.2,2.2 6.2,3.6 6.2,4.9C6.2,6.2 5.2,7.8 3.6,9.2C2,7.8 1,6.2 1,4.9C1,3.6 2,2.2 3.6,0.8z" fill="#fafafa" stroke="#b4b4b4" stroke-width="0.6"/><path d="M3.6,0.8V9.2M1,4.9H6.2M2.3,2.2V7.8M4.9,2.2V7.8M1.5,3.2H5.7M1.5,6.6H5.7" stroke="#b4b4b4" stroke-width="0.4"/><path d="M7.2,5V9.2M5.2,7.2H9.2" stroke="#999" stroke-width="0.8"/></svg>
<svg class="abs" style="left:800.50px;top:56.40px" width="10" height="10" viewBox="0 0 10 10"><path d="M3.6,0.8C5.2,2.2 6.2,3.6 6.2,4.9C6.2,6.2 5.2,7.8 3.6,9.2C2,7.8 1,6.2 1,4.9C1,3.6 2,2.2 3.6,0.8z" fill="#fafafa" stroke="#c0c0c0" stroke-width="0.6"/><path d="M3.6,0.8V9.2M1,4.9H6.2M2.3,2.2V7.8M4.9,2.2V7.8M1.5,3.2H5.7M1.5,6.6H5.7" stroke="#c0c0c0" stroke-width="0.4"/><path d="M5.8,6L8.8,9M8.8,6L5.8,9" stroke="#bbb" stroke-width="0.7"/></svg>
<svg class="abs" style="left:815.50px;top:56.40px" width="10" height="10" viewBox="0 0 10 10"><path d="M3.6,0.8C5.2,2.2 6.2,3.6 6.2,4.9C6.2,6.2 5.2,7.8 3.6,9.2C2,7.8 1,6.2 1,4.9C1,3.6 2,2.2 3.6,0.8z" fill="#fafafa" stroke="#b8b8b8" stroke-width="0.6"/><path d="M3.6,0.8V9.2M1,4.9H6.2M2.3,2.2V7.8M4.9,2.2V7.8M1.5,3.2H5.7M1.5,6.6H5.7" stroke="#b8b8b8" stroke-width="0.4"/><rect x="4.8" y="5" width="4.4" height="3.8" fill="#e4e4e4" stroke="#aaa" stroke-width="0.5"/><path d="M4.8,6.9H9.2M7,5V8.8" stroke="#aaa" stroke-width="0.4"/></svg>
<svg class="abs" style="left:830.50px;top:56.40px" width="10" height="10" viewBox="0 0 10 10"><path d="M3.6,0.8C5.2,2.2 6.2,3.6 6.2,4.9C6.2,6.2 5.2,7.8 3.6,9.2C2,7.8 1,6.2 1,4.9C1,3.6 2,2.2 3.6,0.8z" fill="#fafafa" stroke="#c4c4c4" stroke-width="0.6"/><path d="M3.6,0.8V9.2M1,4.9H6.2M2.3,2.2V7.8M4.9,2.2V7.8M1.5,3.2H5.7M1.5,6.6H5.7" stroke="#c4c4c4" stroke-width="0.4"/><circle cx="7.6" cy="7.4" r="1.3" fill="none" stroke="#c8c8c8" stroke-width="0.6"/></svg>
<svg class="abs" style="left:845.50px;top:56.40px" width="10" height="10" viewBox="0 0 10 10"><path d="M3.6,0.8C5.2,2.2 6.2,3.6 6.2,4.9C6.2,6.2 5.2,7.8 3.6,9.2C2,7.8 1,6.2 1,4.9C1,3.6 2,2.2 3.6,0.8z" fill="#fafafa" stroke="#b0b0b0" stroke-width="0.6"/><path d="M3.6,0.8V9.2M1,4.9H6.2M2.3,2.2V7.8M4.9,2.2V7.8M1.5,3.2H5.7M1.5,6.6H5.7" stroke="#b0b0b0" stroke-width="0.4"/><path d="M5,6H9M5,7.6H9M8.8,5V9" stroke="#666" stroke-width="0.8"/></svg>
<div class="abs" style="left:859.10px;top:54.90px;width:1px;height:13px;background:#c9c9c9"></div>
<svg class="abs" style="left:864.90px;top:56.40px" width="10" height="10" viewBox="0 0 10 10"><path d="M3.6,0.8C5.2,2.2 6.2,3.6 6.2,4.9C6.2,6.2 5.2,7.8 3.6,9.2C2,7.8 1,6.2 1,4.9C1,3.6 2,2.2 3.6,0.8z" fill="#fafafa" stroke="#c0c0c0" stroke-width="0.6"/><path d="M3.6,0.8V9.2M1,4.9H6.2M2.3,2.2V7.8M4.9,2.2V7.8M1.5,3.2H5.7M1.5,6.6H5.7" stroke="#c0c0c0" stroke-width="0.4"/><path d="M3,8.6C5,9.6 8.4,9 9,6.6M9,5V8.8" fill="none" stroke="#aaa" stroke-width="0.6"/></svg>
<svg class="abs" style="left:879.50px;top:56.40px" width="10" height="10" viewBox="0 0 10 10"><path d="M1.2,2.2H4V8.4H1.2zM6,2.2H8.8V8.4H6z" fill="#f2f2f2" stroke="#a4a4a4" stroke-width="0.6"/><path d="M2.6,1V9.4M7.4,1V9.4M1.2,4.2H4M1.2,6.4H4M6,4.2H8.8M6,6.4H8.8M5,0.8V9.4" stroke="#b0b0b0" stroke-width="0.5"/></svg>
<svg class="abs" style="left:894.70px;top:56.40px" width="10" height="10" viewBox="0 0 10 10"><path d="M1.2,2.2H4V8.4H1.2zM6,2.2H8.8V8.4H6z" fill="#f2f2f2" stroke="#a4a4a4" stroke-width="0.6"/><path d="M2.6,1V9.4M7.4,1V9.4M1.2,4.2H4M1.2,6.4H4M6,4.2H8.8M6,6.4H8.8M5,0.8V9.4" stroke="#b0b0b0" stroke-width="0.5"/></svg>
<svg class="abs" style="left:909.50px;top:56.40px" width="10" height="10" viewBox="0 0 10 10"><path d="M3.6,0.8C5.2,2.2 6.2,3.6 6.2,4.9C6.2,6.2 5.2,7.8 3.6,9.2C2,7.8 1,6.2 1,4.9C1,3.6 2,2.2 3.6,0.8z" fill="#fafafa" stroke="#b8b8b8" stroke-width="0.6"/><path d="M3.6,0.8V9.2M1,4.9H6.2M2.3,2.2V7.8M4.9,2.2V7.8M1.5,3.2H5.7M1.5,6.6H5.7" stroke="#b8b8b8" stroke-width="0.4"/><path d="M6,2.2C8.6,2.6 9,6 6.6,7.6" fill="none" stroke="#b0b0b0" stroke-width="0.6"/></svg>
<svg class="abs" style="left:924.20px;top:56.40px" width="10" height="10" viewBox="0 0 10 10"><path d="M3.6,0.8C5.2,2.2 6.2,3.6 6.2,4.9C6.2,6.2 5.2,7.8 3.6,9.2C2,7.8 1,6.2 1,4.9C1,3.6 2,2.2 3.6,0.8z" fill="#fafafa" stroke="#c8c8c8" stroke-width="0.6"/><path d="M3.6,0.8V9.2M1,4.9H6.2M2.3,2.2V7.8M4.9,2.2V7.8M1.5,3.2H5.7M1.5,6.6H5.7" stroke="#c8c8c8" stroke-width="0.4"/><path d="M6,2.2C8.6,2.6 9,6 6.6,7.6" fill="none" stroke="#d0d0d0" stroke-width="0.6"/></svg>
<svg class="abs" style="left:939.30px;top:56.40px" width="10" height="10" viewBox="0 0 10 10"><path d="M1,1.4H6V4.6H8V9" fill="none" stroke="#444" stroke-width="0.9" stroke-dasharray="1.4 0.8"/><rect x="0.8" y="0.8" width="1.6" height="1.6" fill="#333"/><rect x="3.6" y="7.4" width="1.4" height="1.4" fill="#333"/><rect x="7.2" y="7.6" width="1.4" height="1.4" fill="#333"/></svg>
<svg class="abs" style="left:954.30px;top:56.40px" width="10" height="10" viewBox="0 0 10 10"><rect x="2" y="2" width="4.2" height="4.2" fill="#fff" stroke="#9a9a9a" stroke-width="0.6"/><rect x="3.8" y="3.8" width="4.2" height="4.2" fill="#fff" stroke="#8a8a8a" stroke-width="0.6"/></svg>
<div class="abs" style="left:967.90px;top:54.90px;width:1px;height:13px;background:#c9c9c9"></div>
<svg class="abs" style="left:973.50px;top:56.40px" width="10" height="10" viewBox="0 0 10 10"><rect x="1" y="1.4" width="5.4" height="2.8" fill="#ececec" stroke="#c0c0c0" stroke-width="0.6"/><rect x="3.4" y="5.4" width="5.8" height="3" fill="#f4f4f4" stroke="#c4c4c4" stroke-width="0.6"/><path d="M2.2,4.2V7H3.4" fill="none" stroke="#c4c4c4" stroke-width="0.6"/></svg>
<svg class="abs" style="left:989.10px;top:56.40px" width="10" height="10" viewBox="0 0 10 10"><path d="M5,0.8L7.4,4.8L5,9.2L2.6,4.8z" fill="none" stroke="#b8b8b8" stroke-width="0.7"/><path d="M5,0.8V9.2M2.6,4.8H7.4M6,6.6L7.8,8.6" stroke="#bbb" stroke-width="0.5"/></svg>
<svg class="abs" style="left:1016.50px;top:54.80px" width="6" height="12" viewBox="0 0 6 12"><path d="M0.8,0.8L3,2.8L5.2,0.8M0.8,3.4L3,5.4L5.2,3.4" fill="none" stroke="#333" stroke-width="0.8"/><path d="M0.4,8.8H5.6L3,11.4z" fill="#1a1a1a"/></svg>
<svg class="abs" style="left:1.80px;top:71.50px" width="5" height="15.5" viewBox="0 0 5 15.5"><path d="M1,1.5V14.0M3.4,1.5V14.0" stroke="#c4c4c4" stroke-width="0.9" stroke-dasharray="0.8 1.25" fill="none"/></svg>
<svg class="abs" style="left:9.00px;top:74.50px" width="10" height="10" viewBox="0 0 10 10"><path d="M2,3.4L4.2,1L6.4,3.4L4.2,5.2z" fill="none" stroke="#bdbdbd" stroke-width="0.6"/><path d="M1.4,6L4,7.4" stroke="#555" stroke-width="1.1"/><circle cx="6.6" cy="7.2" r="2" fill="#aaa"/></svg>
<svg class="abs" style="left:23.75px;top:74.50px" width="10" height="10" viewBox="0 0 10 10"><path d="M2,3.4L4.2,1L6.4,3.4L4.2,5.2z" fill="none" stroke="#c4c4c4" stroke-width="0.6"/><path d="M1.4,6L4,7.4" stroke="#555" stroke-width="1.1"/><circle cx="6.6" cy="7.2" r="2" fill="#e4e4e4" stroke="#c8c8c8" stroke-width="0.5"/></svg>
<svg class="abs" style="left:39.00px;top:74.50px" width="10" height="10" viewBox="0 0 10 10"><path d="M0.8,5L3,3.6H5.4L9,3V7L5.4,6.4H3z" fill="#e8e8e8" stroke="#c8c8c8" stroke-width="0.6"/><circle cx="4.6" cy="5" r="1.1" fill="none" stroke="#bbb" stroke-width="0.5"/></svg>
<svg class="abs" style="left:53.75px;top:74.50px" width="10" height="10" viewBox="0 0 10 10"><path d="M3.2,0.8H6.8L6.4,5.4L5.6,6.6V9.2H4.4V6.6L3.6,5.4z" fill="#e8e8e8" stroke="#c4c4c4" stroke-width="0.6"/></svg>
<svg class="abs" style="left:68.75px;top:74.50px" width="10" height="10" viewBox="0 0 10 10"><path d="M4.4,0.8H5.6V2.8L6.6,4.4L7,9.2H3L3.4,4.4L4.4,2.8z" fill="#ededed" stroke="#c8c8c8" stroke-width="0.6"/></svg>
<svg class="abs" style="left:84.00px;top:74.50px" width="10" height="10" viewBox="0 0 10 10"><path d="M0.8,3.6H4.6L9.2,5L4.6,6.4H0.8z" fill="#e8e8e8" stroke="#c4c4c4" stroke-width="0.6"/></svg>
<svg class="abs" style="left:99.40px;top:74.50px" width="10" height="10" viewBox="0 0 10 10"><path d="M1,1.4H5.2L7.8,2.4L5.2,3.6H1z" fill="#e8e8e8" stroke="#c0c0c0" stroke-width="0.5"/><rect x="1.6" y="5.4" width="3" height="3.4" rx="1" fill="#ddd" stroke="#bbb" stroke-width="0.5"/><rect x="5.4" y="5.4" width="3" height="3.4" rx="1" fill="#ddd" stroke="#bbb" stroke-width="0.5"/></svg>
<svg class="abs" style="left:112.00px;top:81.80px" width="6" height="4" viewBox="0 0 6 4"><path d="M0.4,0.5H5.6L3,3.4z" fill="#1a1a1a"/></svg>
<div class="abs" style="left:119.75px;top:70.50px;width:1px;height:17.50px;background:#dedede"></div>
<svg class="abs" style="left:122.60px;top:71.50px" width="5" height="15.5" viewBox="0 0 5 15.5"><path d="M1,1.5V14.0M3.4,1.5V14.0" stroke="#c4c4c4" stroke-width="0.9" stroke-dasharray="0.8 1.25" fill="none"/></svg>
<div class="abs" style="left:128.00px;top:72.00px;width:14.40px;height:14.8px;background:#cde5fa;border:0.6px solid #b9dbf8;border-radius:1.8px"></div>
<svg class="abs" style="left:130.20px;top:74.50px" width="10" height="10" viewBox="0 0 10 10"><path d="M1.2,1.8H8.8V8.4C5,8 1.6,5.4 1.2,1.8z" fill="#f2f8fe" stroke="#2a8de2" stroke-width="0.9" stroke-linejoin="round"/><path d="M3,2.4C3.6,4.8 5.6,6.6 8.2,7M5,2.4C5.4,4 6.6,5 8.4,5.4" fill="none" stroke="#5a6470" stroke-width="0.6"/></svg>
<div class="abs" style="left:143.00px;top:72.00px;width:14.40px;height:14.8px;background:#cde5fa;border:0.6px solid #b9dbf8;border-radius:1.8px"></div>
<svg class="abs" style="left:145.20px;top:74.50px" width="10" height="10" viewBox="0 0 10 10"><path d="M1.2,3.6C3,2.8 7.6,2.4 9.2,2.6C9,5.4 6.8,7.6 3.2,7.6C1.8,7.6 1,5.6 1.2,3.6z" fill="#f2f8fe" stroke="#2a8de2" stroke-width="0.9"/><path d="M2,5.6C4,6 7,5.2 8.4,3.8M1.8,4.4C3.8,4.8 6.4,4.2 8.6,3" fill="none" stroke="#5a6470" stroke-width="0.6"/></svg>
<svg class="abs" style="left:159.60px;top:74.50px" width="10" height="10" viewBox="0 0 10 10"><path d="M0.8,3H9.4C9.2,5.4 8,7.2 6,7.2H1.6z" fill="#f4faff" stroke="#2a8de2" stroke-width="0.8"/><path d="M1,4.4H9" stroke="#2a8de2" stroke-width="0.5"/></svg>
<div class="abs" style="left:172.40px;top:72.00px;width:14.35px;height:14.8px;background:#cde5fa;border:0.6px solid #b9dbf8;border-radius:1.8px"></div>
<svg class="abs" style="left:174.60px;top:74.50px" width="10" height="10" viewBox="0 0 10 10"><path d="M0.8,2H5.4C7.8,2 9.4,3.4 9.4,5C9.4,6.6 7.8,8 5.4,8H0.8z" fill="#e4f2fe" stroke="#2a8de2" stroke-width="0.8"/><path d="M2.4,3.6H6C7.4,3.6 8,4.4 8,5C8,5.6 7.4,6.4 6,6.4H2.4z" fill="#fff" stroke="#2a8de2" stroke-width="0.6"/><path d="M2.4,5H7" stroke="#8a8f96" stroke-width="0.6"/></svg>
<svg class="abs" style="left:189.00px;top:74.50px" width="10" height="10" viewBox="0 0 10 10"><path d="M0.6,0.6l1.6,1.6m0,-1.6l-1.6,1.6" stroke="#2a8de2" stroke-width="0.7"/><path d="M3.8,0.2l1.6,1.6m0,-1.6l-1.6,1.6" stroke="#2a8de2" stroke-width="0.7"/><path d="M0.2,3.8l1.6,1.6m0,-1.6l-1.6,1.6" stroke="#2a8de2" stroke-width="0.7"/><path d="M3.6,3.4L8.8,5.6L6.6,6.4L8.4,9L7.4,9.4L5.8,6.8L4.4,8.4z" fill="#5a7a9a" stroke="#345" stroke-width="0.4"/></svg>
<div class="abs" style="left:203.10px;top:73.00px;width:1px;height:13px;background:#c9c9c9"></div>
<div class="abs" style="left:206.00px;top:72.00px;width:15.00px;height:14.8px;background:#cde5fa;border:0.6px solid #b9dbf8;border-radius:1.8px"></div>
<svg class="abs" style="left:208.50px;top:74.50px" width="10" height="10" viewBox="0 0 10 10"><path d="M0.6,2.3H5.6C7.8,2.3 9.4,3.8 9.4,5.1C9.4,6.4 7.8,7.9 5.6,7.9H0.6z" fill="#fbfdff" stroke="#30343c" stroke-width="0.8"/></svg>
<div class="abs" style="left:221.75px;top:72.00px;width:14.25px;height:14.8px;background:#cde5fa;border:0.6px solid #b9dbf8;border-radius:1.8px"></div>
<svg class="abs" style="left:223.90px;top:74.50px" width="10" height="10" viewBox="0 0 10 10"><path d="M1.8,2H8.6V4.8C8.6,7 5.6,8.2 2.8,8.2C2.2,6 1.8,4 1.8,2z" fill="#fbfdff" stroke="#2a8de2" stroke-width="0.8" stroke-linejoin="round"/><path d="M2,4.6L8.6,3.2" fill="none" stroke="#2a8de2" stroke-width="0.7"/></svg>
<svg class="abs" style="left:238.60px;top:74.50px" width="10" height="10" viewBox="0 0 10 10"><path d="M0.8,2.6H9.2C9.2,5.2 7.6,7.4 5,7.4H0.8z" fill="#f4faff" stroke="#2a8de2" stroke-width="0.9"/><path d="M6.4,3.8H8.2" stroke="#2a8de2" stroke-width="0.6"/></svg>
<svg class="abs" style="left:253.40px;top:74.50px" width="10" height="10" viewBox="0 0 10 10"><path d="M1,5.8L5.2,1L9,4.4L5,9z" fill="#e4f2fe" stroke="#2a8de2" stroke-width="0.8"/><path d="M3,3.4L7,7M1.4,6.2L8.6,4" stroke="#2a8de2" stroke-width="0.6"/></svg>
<div class="abs" style="left:267.00px;top:73.00px;width:1px;height:13px;background:#c9c9c9"></div>
<div class="abs" style="left:270.40px;top:72.00px;width:15.35px;height:14.8px;background:#cde5fa;border:0.6px solid #b9dbf8;border-radius:1.8px"></div>
<svg class="abs" style="left:273.00px;top:74.50px" width="10" height="10" viewBox="0 0 10 10"><path d="M3.4,5.2L8.6,4.2L7.6,8L2.8,8.8z" fill="#fbfdff" stroke="#2a8de2" stroke-width="0.8" stroke-linejoin="round"/><path d="M0.8,8.6L7,1.2" stroke="#2a8de2" stroke-width="0.9"/></svg>
<svg class="abs" style="left:287.75px;top:74.50px" width="10" height="10" viewBox="0 0 10 10"><path d="M0.8,2.6H9.2C9.2,5.2 7.6,7.4 5,7.4H0.8z" fill="#f4faff" stroke="#2a8de2" stroke-width="0.9"/><path d="M3,4.4H7.6" stroke="#8a8f96" stroke-width="0.7"/></svg>
<div class="abs" style="left:301.10px;top:73.00px;width:1px;height:13px;background:#c9c9c9"></div>
<svg class="abs" style="left:307.25px;top:74.50px" width="10" height="10" viewBox="0 0 10 10"><path d="M3.6,0.8C5.2,2.2 6.2,3.6 6.2,4.9C6.2,6.2 5.2,7.8 3.6,9.2C2,7.8 1,6.2 1,4.9C1,3.6 2,2.2 3.6,0.8z" fill="#fafafa" stroke="#bdbdbd" stroke-width="0.6"/><path d="M3.6,0.8V9.2M1,4.9H6.2M2.3,2.2V7.8M4.9,2.2V7.8M1.5,3.2H5.7M1.5,6.6H5.7" stroke="#bdbdbd" stroke-width="0.4"/><ellipse cx="6.8" cy="7.2" rx="2.4" ry="1.7" fill="#333"/><circle cx="6.8" cy="7.2" r="0.7" fill="#aaa"/></svg>
<svg class="abs" style="left:322.00px;top:74.50px" width="10" height="10" viewBox="0 0 10 10"><path d="M1,3L3,1.4L5,3V7L3,8.6L1,7zM5,3L7,1.4L9,3V7L7,8.6L5,7z" fill="#ececec" stroke="#c4c4c4" stroke-width="0.6"/><path d="M1,5H9" stroke="#c8c8c8" stroke-width="0.5"/></svg>
<svg class="abs" style="left:334.90px;top:81.80px" width="6" height="4" viewBox="0 0 6 4"><path d="M0.4,0.5H5.6L3,3.4z" fill="#1a1a1a"/></svg>
<div class="abs" style="left:342.40px;top:70.50px;width:1px;height:17.50px;background:#dedede"></div>
<svg class="abs" style="left:345.20px;top:71.50px" width="5" height="15.5" viewBox="0 0 5 15.5"><path d="M1,1.5V14.0M3.4,1.5V14.0" stroke="#c4c4c4" stroke-width="0.9" stroke-dasharray="0.8 1.25" fill="none"/></svg>
<div class="abs" style="left:350.40px;top:72.00px;width:15.35px;height:14.8px;background:#cde5fa;border:0.6px solid #b9dbf8;border-radius:1.8px"></div>
<svg class="abs" style="left:353.00px;top:74.50px" width="10" height="10" viewBox="0 0 10 10"><path d="M1.2,4L5.4,1.8L9,4.6L6.4,8.2L2.2,7.6z" fill="#5a5f68" stroke="#3c4048" stroke-width="0.5"/></svg>
<svg class="abs" style="left:367.80px;top:74.50px" width="10" height="10" viewBox="0 0 10 10"><path d="M1.2,3.6L5.2,1.4L9,4.2L6,8.6L2.2,7z" fill="#2e3440"/><path d="M3,4L5.2,2.8L7.4,4.4L5.8,6.6L3.6,5.8z" fill="#3440c8"/></svg>
<svg class="abs" style="left:382.30px;top:74.50px" width="10" height="10" viewBox="0 0 10 10"><path d="M5,2.6V7.4M2.6,5H7.4" stroke="#333" stroke-width="0.8"/></svg>
<div class="abs" style="left:395.50px;top:72.00px;width:14.50px;height:14.8px;background:#cde5fa;border:0.6px solid #b9dbf8;border-radius:1.8px"></div>
<svg class="abs" style="left:397.75px;top:74.50px" width="10" height="10" viewBox="0 0 10 10"><rect x="1.6" y="2.6" width="6.8" height="5.6" fill="#7a8088"/><path d="M1.6,2.6H5.4" stroke="#555" stroke-width="0.8"/><path d="M3,5H7.4M3,6.6H7.4" stroke="#d4d8dc" stroke-width="0.7"/></svg>
<div class="abs" style="left:410.50px;top:72.00px;width:14.50px;height:14.8px;background:#cde5fa;border:0.6px solid #b9dbf8;border-radius:1.8px"></div>
<svg class="abs" style="left:412.75px;top:74.50px" width="10" height="10" viewBox="0 0 10 10"><path d="M1,1.2H9V5.4C9,7.4 7.4,9 5,9C2.6,9 1,7.4 1,5.4z" fill="#4a4f58"/><path d="M2.8,2.8H7.2V5.2C7.2,6.4 6.2,7.2 5,7.2C3.8,7.2 2.8,6.4 2.8,5.2z" fill="#d8e8f6"/></svg>
<div class="abs" style="left:425.50px;top:72.00px;width:14.50px;height:14.8px;background:#cde5fa;border:0.6px solid #b9dbf8;border-radius:1.8px"></div>
<svg class="abs" style="left:427.75px;top:74.50px" width="10" height="10" viewBox="0 0 10 10"><path d="M0.8,2.4H5.2C7.4,2.4 9.2,3.8 9.4,5C9.2,6.2 7.4,7.6 5.2,7.6H0.8z" fill="#5c6068" stroke="#3a3e46" stroke-width="0.5"/></svg>
<svg class="abs" style="left:443.00px;top:74.50px" width="10" height="10" viewBox="0 0 10 10"><path d="M1.4,9L8.8,0.8" stroke="#2a2a2a" stroke-width="1"/><path d="M1.6,1.8L5.6,4.2" stroke="#d8d020" stroke-width="1.8"/></svg>
<svg class="abs" style="left:455.50px;top:81.80px" width="6" height="4" viewBox="0 0 6 4"><path d="M0.4,0.5H5.6L3,3.4z" fill="#1a1a1a"/></svg>
<div class="abs" style="left:463.25px;top:70.50px;width:1px;height:17.50px;background:#dedede"></div>
<svg class="abs" style="left:1px;top:1.8px" width="11" height="11" viewBox="0 0 11 11"><rect x="0" y="0" width="11" height="11" rx="1.6" fill="#1f6fc0"/><path d="M5.5,1.6V9.4M2.2,3.4H8.8V7H2.2z" fill="none" stroke="#fff" stroke-width="1.2"/></svg>
<svg class="abs" style="left:936px;top:0" width="88" height="16" viewBox="936 0 88 16"><path d="M941.7,7.4H948.3" stroke="#222" stroke-width="0.8"/><rect x="972.6" y="5.8" width="5" height="5" rx="0.9" fill="none" stroke="#222" stroke-width="0.8"/><path d="M974,5.8V5.4C974,4.9 974.4,4.5 974.9,4.5H978.2C978.7,4.5 979.1,4.9 979.1,5.4V8.6C979.1,9.1 978.7,9.5 978.2,9.5H977.6" fill="none" stroke="#222" stroke-width="0.8"/><path d="M1004.2,4.6L1010.4,10.8M1010.4,4.6L1004.2,10.8" stroke="#222" stroke-width="0.85"/></svg>
<div class="abs" style="left:991.4px;top:20.6px;width:9px;height:9.2px;border:0.6px solid #dcdcdc;border-radius:1px;background:#fff"></div>
<div class="abs" style="left:1002.4px;top:20.6px;width:9px;height:9.2px;border:0.6px solid #dcdcdc;border-radius:1px;background:#fff"></div>
<div class="abs" style="left:1013.4px;top:20.6px;width:9px;height:9.2px;border:0.6px solid #dcdcdc;border-radius:1px;background:#fff"></div>
<svg class="abs" style="left:990px;top:19px" width="34" height="13" viewBox="990 19 34 13"><path d="M994.3,27H997.3" stroke="#34506e" stroke-width="0.9"/><path d="M1005.2,24.6h2.8v2.6h-2.8zM1006.2,24.6V23.4H1009V26H1008" fill="none" stroke="#34506e" stroke-width="0.7"/><path d="M1016.2,23.6L1019.4,26.8M1019.4,23.6L1016.2,26.8" stroke="#34506e" stroke-width="0.9"/></svg>
<svg class="abs" style="left:0;top:505px" width="300" height="9" viewBox="0 505 300 9"><path d="M9.2,509.3L12,507.2V511.4zM16.4,509.3L13.6,507.2V511.4z" fill="#000"/><path d="M11,509.3H14.6" stroke="#000" stroke-width="1.2"/><path d="M52.8,505.8L55,508.6H50.6zM52.8,512.8L55,510H50.6z" fill="#000"/><path d="M52.8,508V511" stroke="#000" stroke-width="1.2"/><path d="M91.2,508.8C94,507.4 96.8,508.4 96.2,512.4" fill="none" stroke="#000" stroke-width="1.2"/><path d="M88.6,508.2L92.8,506.4L92.4,510.8z" fill="#000"/><path d="M130,512L135,507" stroke="#000" stroke-width="1.1"/><path d="M136,506V509.6L132.4,506zM129,513V509.4L132.6,513z" fill="#000"/></svg>
<div class="abs fit" style="left:18.75px;top:505.30px;font-size:7px;line-height:8.4px;color:#000;white-space:nowrap;transform-origin:0 50%;transform:scaleX(0.7130);">1.304</div>
<div class="abs fit" style="left:58.00px;top:505.30px;font-size:7px;line-height:8.4px;color:#000;white-space:nowrap;transform-origin:0 50%;transform:scaleX(0.7929);">2.193</div>
<div class="abs fit" style="left:100.60px;top:505.30px;font-size:7px;line-height:8.4px;color:#000;white-space:nowrap;transform-origin:0 50%;transform:scaleX(0.7240);">59.3°</div>
<div class="abs fit" style="left:138.30px;top:505.30px;font-size:7px;line-height:8.4px;color:#000;white-space:nowrap;transform-origin:0 50%;transform:scaleX(0.7969);">2.551 (1.304,2.193)</div>
<div class="abs fit" style="left:255.80px;top:505.30px;font-size:7px;line-height:8.4px;color:#000;white-space:nowrap;transform-origin:0 50%;transform:scaleX(0.5632);">9</div>
<div class="abs" style="left:0;top:532.2px;width:61px;height:1px;background:#dadada"></div>
<svg class="abs" style="left:1.80px;top:515.00px" width="5" height="16.5" viewBox="0 0 5 16.5"><path d="M1,1.5V15.0M3.4,1.5V15.0" stroke="#c4c4c4" stroke-width="0.9" stroke-dasharray="0.8 1.25" fill="none"/></svg>
<div class="abs fit" style="left:9.75px;top:518.60px;font-size:8.6px;line-height:10.3px;color:#1c1c1c;white-space:nowrap;transform-origin:0 50%;transform:scaleX(0.8961);">Study</div>
<div class="abs" style="left:33.00px;top:516.70px;width:1px;height:13px;background:#c9c9c9"></div>
<svg class="abs" style="left:38.70px;top:518.50px" width="10" height="10" viewBox="0 0 10 10"><circle cx="5" cy="2.8" r="2.1" fill="#1a8fe8"/><path d="M0.8,9.4C0.8,6.6 2.6,5.4 5,5.4S9.2,6.6 9.2,9.4z" fill="#1a8fe8"/></svg>
<svg class="abs" style="left:51.75px;top:525.70px" width="6" height="4" viewBox="0 0 6 4"><path d="M0.4,0.5H5.6L3,3.4z" fill="#1a1a1a"/></svg>
<div class="abs" style="left:60.10px;top:514.00px;width:1px;height:18.50px;background:#dedede"></div>
<div class="abs fit" style="left:1.40px;top:534.40px;font-size:8.6px;line-height:10.3px;color:#1c1c1c;white-space:nowrap;transform-origin:0 50%;transform:scaleX(0.8694);">Ready</div>
<div class="abs fit" style="left:715.60px;top:534.40px;font-size:8.6px;line-height:10.3px;color:#1c1c1c;white-space:nowrap;transform-origin:0 50%;transform:scaleX(0.8950);">C:¥Users¥keisu¥Downloads¥19t</div>
<div class="abs fit" style="left:827.90px;top:534.10px;font-size:8.4px;line-height:10.1px;color:#1c1c1c;white-space:nowrap;transform-origin:0 50%;transform:scaleX(0.6961);">バンカリング船</div>
<div class="abs fit" style="left:869.90px;top:534.40px;font-size:8.6px;line-height:10.3px;color:#1c1c1c;white-space:nowrap;transform-origin:0 50%;transform:scaleX(0.9069);">230327 (1).msd</div>
<div class="abs fit" style="left:957.00px;top:534.40px;font-size:8.6px;line-height:10.3px;color:#1c1c1c;white-space:nowrap;transform-origin:0 50%;transform:scaleX(0.8720);">Object Snap: OFF</div>
<div class="abs" style="left:932.6px;top:534.5px;width:1px;height:8.5px;background:#d4d4d4"></div>
<div class="abs" style="left:954.7px;top:534.5px;width:1px;height:8.5px;background:#d4d4d4"></div>
</body></html>
